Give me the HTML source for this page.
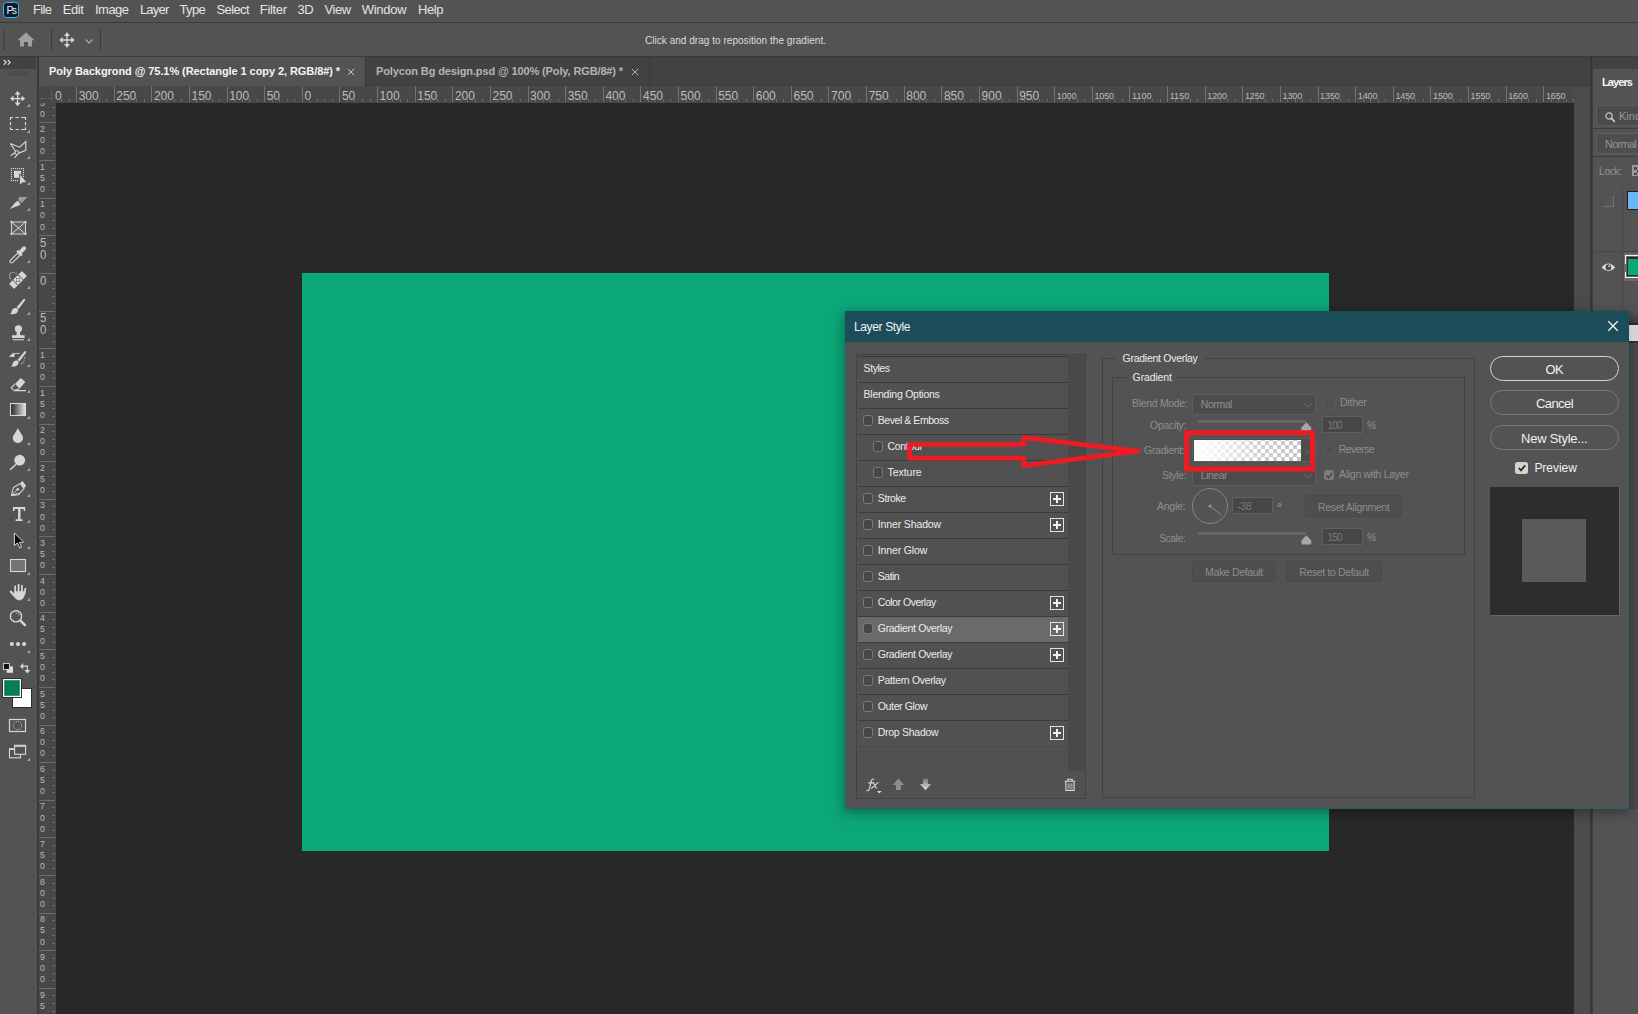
<!DOCTYPE html>
<html><head><meta charset="utf-8"><title>ps</title>
<style>
html,body{margin:0;padding:0;background:#535353;overflow:hidden;width:1638px;height:1014px;}
body{width:1638px;height:1014px;position:relative;overflow:hidden;font-family:"Liberation Sans",sans-serif;}
.a{position:absolute;box-sizing:border-box;}
.t{position:absolute;white-space:nowrap;font-family:"Liberation Sans",sans-serif;}
svg{position:absolute;overflow:visible;}
</style></head><body>
<div class="a" style="left:0px;top:0px;width:1638px;height:1014px;background:#535353;"></div>
<div class="a" style="left:0px;top:22px;width:1638px;height:1px;background:#3a3a3a;"></div>
<div class="a" style="left:0px;top:56px;width:1638px;height:1px;background:#3a3a3a;"></div>
<div class="a" style="left:37px;top:57px;width:1556px;height:29px;background:#424242;"></div>
<div class="a" style="left:56px;top:103px;width:1518px;height:911px;background:#282828;"></div>
<div class="a" style="left:39px;top:86px;width:1535px;height:17px;background:#484848;"></div>
<div class="a" style="left:39px;top:103px;width:17px;height:911px;background:#484848;"></div>
<div class="a" style="left:37px;top:85px;width:1556px;height:1px;background:#3a3a3a;"></div>
<div class="a" style="left:39px;top:86px;width:1535px;height:17px;overflow:hidden;"><div class="a" style="left:-39px;top:0;width:1574px;height:17px;"><div class="t" style="left:3.4px;top:1.6px;line-height:17px;font-size:12px;color:#bcbcbc;letter-spacing:-0.02px">400</div><div class="t" style="left:41.8px;top:1.6px;line-height:17px;font-size:12px;color:#bcbcbc;letter-spacing:-0.02px">350</div><div class="a" style="left:46px;top:13px;width:1px;height:3px;background:#6c6c6c"></div><div class="a" style="left:54px;top:13px;width:1px;height:3px;background:#6c6c6c"></div><div class="a" style="left:61px;top:13px;width:1px;height:3px;background:#6c6c6c"></div><div class="a" style="left:69px;top:13px;width:1px;height:3px;background:#6c6c6c"></div><div class="a" style="left:76px;top:0;width:1px;height:16px;background:#727272"></div><div class="t" style="left:78.7px;top:1.6px;line-height:17px;font-size:12px;color:#bcbcbc;letter-spacing:-0.02px">300</div><div class="a" style="left:84px;top:13px;width:1px;height:3px;background:#6c6c6c"></div><div class="a" style="left:91px;top:13px;width:1px;height:3px;background:#6c6c6c"></div><div class="a" style="left:99px;top:13px;width:1px;height:3px;background:#6c6c6c"></div><div class="a" style="left:106px;top:13px;width:1px;height:3px;background:#6c6c6c"></div><div class="a" style="left:114px;top:0;width:1px;height:16px;background:#727272"></div><div class="t" style="left:116.3px;top:1.6px;line-height:17px;font-size:12px;color:#bcbcbc;letter-spacing:-0.02px">250</div><div class="a" style="left:121px;top:13px;width:1px;height:3px;background:#6c6c6c"></div><div class="a" style="left:129px;top:13px;width:1px;height:3px;background:#6c6c6c"></div><div class="a" style="left:136px;top:13px;width:1px;height:3px;background:#6c6c6c"></div><div class="a" style="left:144px;top:13px;width:1px;height:3px;background:#6c6c6c"></div><div class="a" style="left:151px;top:0;width:1px;height:16px;background:#727272"></div><div class="t" style="left:153.9px;top:1.6px;line-height:17px;font-size:12px;color:#bcbcbc;letter-spacing:-0.02px">200</div><div class="a" style="left:159px;top:13px;width:1px;height:3px;background:#6c6c6c"></div><div class="a" style="left:166px;top:13px;width:1px;height:3px;background:#6c6c6c"></div><div class="a" style="left:174px;top:13px;width:1px;height:3px;background:#6c6c6c"></div><div class="a" style="left:181px;top:13px;width:1px;height:3px;background:#6c6c6c"></div><div class="a" style="left:189px;top:0;width:1px;height:16px;background:#727272"></div><div class="t" style="left:191.5px;top:1.6px;line-height:17px;font-size:12px;color:#bcbcbc;letter-spacing:-0.02px">150</div><div class="a" style="left:196px;top:13px;width:1px;height:3px;background:#6c6c6c"></div><div class="a" style="left:204px;top:13px;width:1px;height:3px;background:#6c6c6c"></div><div class="a" style="left:212px;top:13px;width:1px;height:3px;background:#6c6c6c"></div><div class="a" style="left:219px;top:13px;width:1px;height:3px;background:#6c6c6c"></div><div class="a" style="left:227px;top:0;width:1px;height:16px;background:#727272"></div><div class="t" style="left:229.2px;top:1.6px;line-height:17px;font-size:12px;color:#bcbcbc;letter-spacing:-0.02px">100</div><div class="a" style="left:234px;top:13px;width:1px;height:3px;background:#6c6c6c"></div><div class="a" style="left:242px;top:13px;width:1px;height:3px;background:#6c6c6c"></div><div class="a" style="left:249px;top:13px;width:1px;height:3px;background:#6c6c6c"></div><div class="a" style="left:257px;top:13px;width:1px;height:3px;background:#6c6c6c"></div><div class="a" style="left:264px;top:0;width:1px;height:16px;background:#727272"></div><div class="t" style="left:266.8px;top:1.6px;line-height:17px;font-size:12px;color:#bcbcbc;letter-spacing:-0.12px">50</div><div class="a" style="left:272px;top:13px;width:1px;height:3px;background:#6c6c6c"></div><div class="a" style="left:279px;top:13px;width:1px;height:3px;background:#6c6c6c"></div><div class="a" style="left:287px;top:13px;width:1px;height:3px;background:#6c6c6c"></div><div class="a" style="left:294px;top:13px;width:1px;height:3px;background:#6c6c6c"></div><div class="a" style="left:302px;top:0;width:1px;height:16px;background:#727272"></div><div class="t" style="left:304.4px;top:1.6px;line-height:17px;font-size:12px;color:#bcbcbc;letter-spacing:-0.42px">0</div><div class="a" style="left:309px;top:13px;width:1px;height:3px;background:#6c6c6c"></div><div class="a" style="left:317px;top:13px;width:1px;height:3px;background:#6c6c6c"></div><div class="a" style="left:324px;top:13px;width:1px;height:3px;background:#6c6c6c"></div><div class="a" style="left:332px;top:13px;width:1px;height:3px;background:#6c6c6c"></div><div class="a" style="left:339px;top:0;width:1px;height:16px;background:#727272"></div><div class="t" style="left:342.0px;top:1.6px;line-height:17px;font-size:12px;color:#bcbcbc;letter-spacing:-0.12px">50</div><div class="a" style="left:347px;top:13px;width:1px;height:3px;background:#6c6c6c"></div><div class="a" style="left:354px;top:13px;width:1px;height:3px;background:#6c6c6c"></div><div class="a" style="left:362px;top:13px;width:1px;height:3px;background:#6c6c6c"></div><div class="a" style="left:370px;top:13px;width:1px;height:3px;background:#6c6c6c"></div><div class="a" style="left:377px;top:0;width:1px;height:16px;background:#727272"></div><div class="t" style="left:379.6px;top:1.6px;line-height:17px;font-size:12px;color:#bcbcbc;letter-spacing:-0.02px">100</div><div class="a" style="left:385px;top:13px;width:1px;height:3px;background:#6c6c6c"></div><div class="a" style="left:392px;top:13px;width:1px;height:3px;background:#6c6c6c"></div><div class="a" style="left:400px;top:13px;width:1px;height:3px;background:#6c6c6c"></div><div class="a" style="left:407px;top:13px;width:1px;height:3px;background:#6c6c6c"></div><div class="a" style="left:415px;top:0;width:1px;height:16px;background:#727272"></div><div class="t" style="left:417.3px;top:1.6px;line-height:17px;font-size:12px;color:#bcbcbc;letter-spacing:-0.02px">150</div><div class="a" style="left:422px;top:13px;width:1px;height:3px;background:#6c6c6c"></div><div class="a" style="left:430px;top:13px;width:1px;height:3px;background:#6c6c6c"></div><div class="a" style="left:437px;top:13px;width:1px;height:3px;background:#6c6c6c"></div><div class="a" style="left:445px;top:13px;width:1px;height:3px;background:#6c6c6c"></div><div class="a" style="left:452px;top:0;width:1px;height:16px;background:#727272"></div><div class="t" style="left:454.9px;top:1.6px;line-height:17px;font-size:12px;color:#bcbcbc;letter-spacing:-0.02px">200</div><div class="a" style="left:460px;top:13px;width:1px;height:3px;background:#6c6c6c"></div><div class="a" style="left:467px;top:13px;width:1px;height:3px;background:#6c6c6c"></div><div class="a" style="left:475px;top:13px;width:1px;height:3px;background:#6c6c6c"></div><div class="a" style="left:482px;top:13px;width:1px;height:3px;background:#6c6c6c"></div><div class="a" style="left:490px;top:0;width:1px;height:16px;background:#727272"></div><div class="t" style="left:492.5px;top:1.6px;line-height:17px;font-size:12px;color:#bcbcbc;letter-spacing:-0.02px">250</div><div class="a" style="left:497px;top:13px;width:1px;height:3px;background:#6c6c6c"></div><div class="a" style="left:505px;top:13px;width:1px;height:3px;background:#6c6c6c"></div><div class="a" style="left:512px;top:13px;width:1px;height:3px;background:#6c6c6c"></div><div class="a" style="left:520px;top:13px;width:1px;height:3px;background:#6c6c6c"></div><div class="a" style="left:528px;top:0;width:1px;height:16px;background:#727272"></div><div class="t" style="left:530.1px;top:1.6px;line-height:17px;font-size:12px;color:#bcbcbc;letter-spacing:-0.02px">300</div><div class="a" style="left:535px;top:13px;width:1px;height:3px;background:#6c6c6c"></div><div class="a" style="left:543px;top:13px;width:1px;height:3px;background:#6c6c6c"></div><div class="a" style="left:550px;top:13px;width:1px;height:3px;background:#6c6c6c"></div><div class="a" style="left:558px;top:13px;width:1px;height:3px;background:#6c6c6c"></div><div class="a" style="left:565px;top:0;width:1px;height:16px;background:#727272"></div><div class="t" style="left:567.7px;top:1.6px;line-height:17px;font-size:12px;color:#bcbcbc;letter-spacing:-0.02px">350</div><div class="a" style="left:573px;top:13px;width:1px;height:3px;background:#6c6c6c"></div><div class="a" style="left:580px;top:13px;width:1px;height:3px;background:#6c6c6c"></div><div class="a" style="left:588px;top:13px;width:1px;height:3px;background:#6c6c6c"></div><div class="a" style="left:595px;top:13px;width:1px;height:3px;background:#6c6c6c"></div><div class="a" style="left:603px;top:0;width:1px;height:16px;background:#727272"></div><div class="t" style="left:605.4px;top:1.6px;line-height:17px;font-size:12px;color:#bcbcbc;letter-spacing:-0.02px">400</div><div class="a" style="left:610px;top:13px;width:1px;height:3px;background:#6c6c6c"></div><div class="a" style="left:618px;top:13px;width:1px;height:3px;background:#6c6c6c"></div><div class="a" style="left:625px;top:13px;width:1px;height:3px;background:#6c6c6c"></div><div class="a" style="left:633px;top:13px;width:1px;height:3px;background:#6c6c6c"></div><div class="a" style="left:640px;top:0;width:1px;height:16px;background:#727272"></div><div class="t" style="left:643.0px;top:1.6px;line-height:17px;font-size:12px;color:#bcbcbc;letter-spacing:-0.02px">450</div><div class="a" style="left:648px;top:13px;width:1px;height:3px;background:#6c6c6c"></div><div class="a" style="left:655px;top:13px;width:1px;height:3px;background:#6c6c6c"></div><div class="a" style="left:663px;top:13px;width:1px;height:3px;background:#6c6c6c"></div><div class="a" style="left:670px;top:13px;width:1px;height:3px;background:#6c6c6c"></div><div class="a" style="left:678px;top:0;width:1px;height:16px;background:#727272"></div><div class="t" style="left:680.6px;top:1.6px;line-height:17px;font-size:12px;color:#bcbcbc;letter-spacing:-0.02px">500</div><div class="a" style="left:686px;top:13px;width:1px;height:3px;background:#6c6c6c"></div><div class="a" style="left:693px;top:13px;width:1px;height:3px;background:#6c6c6c"></div><div class="a" style="left:701px;top:13px;width:1px;height:3px;background:#6c6c6c"></div><div class="a" style="left:708px;top:13px;width:1px;height:3px;background:#6c6c6c"></div><div class="a" style="left:716px;top:0;width:1px;height:16px;background:#727272"></div><div class="t" style="left:718.2px;top:1.6px;line-height:17px;font-size:12px;color:#bcbcbc;letter-spacing:-0.02px">550</div><div class="a" style="left:723px;top:13px;width:1px;height:3px;background:#6c6c6c"></div><div class="a" style="left:731px;top:13px;width:1px;height:3px;background:#6c6c6c"></div><div class="a" style="left:738px;top:13px;width:1px;height:3px;background:#6c6c6c"></div><div class="a" style="left:746px;top:13px;width:1px;height:3px;background:#6c6c6c"></div><div class="a" style="left:753px;top:0;width:1px;height:16px;background:#727272"></div><div class="t" style="left:755.8px;top:1.6px;line-height:17px;font-size:12px;color:#bcbcbc;letter-spacing:-0.02px">600</div><div class="a" style="left:761px;top:13px;width:1px;height:3px;background:#6c6c6c"></div><div class="a" style="left:768px;top:13px;width:1px;height:3px;background:#6c6c6c"></div><div class="a" style="left:776px;top:13px;width:1px;height:3px;background:#6c6c6c"></div><div class="a" style="left:783px;top:13px;width:1px;height:3px;background:#6c6c6c"></div><div class="a" style="left:791px;top:0;width:1px;height:16px;background:#727272"></div><div class="t" style="left:793.5px;top:1.6px;line-height:17px;font-size:12px;color:#bcbcbc;letter-spacing:-0.02px">650</div><div class="a" style="left:798px;top:13px;width:1px;height:3px;background:#6c6c6c"></div><div class="a" style="left:806px;top:13px;width:1px;height:3px;background:#6c6c6c"></div><div class="a" style="left:813px;top:13px;width:1px;height:3px;background:#6c6c6c"></div><div class="a" style="left:821px;top:13px;width:1px;height:3px;background:#6c6c6c"></div><div class="a" style="left:828px;top:0;width:1px;height:16px;background:#727272"></div><div class="t" style="left:831.1px;top:1.6px;line-height:17px;font-size:12px;color:#bcbcbc;letter-spacing:-0.02px">700</div><div class="a" style="left:836px;top:13px;width:1px;height:3px;background:#6c6c6c"></div><div class="a" style="left:844px;top:13px;width:1px;height:3px;background:#6c6c6c"></div><div class="a" style="left:851px;top:13px;width:1px;height:3px;background:#6c6c6c"></div><div class="a" style="left:859px;top:13px;width:1px;height:3px;background:#6c6c6c"></div><div class="a" style="left:866px;top:0;width:1px;height:16px;background:#727272"></div><div class="t" style="left:868.7px;top:1.6px;line-height:17px;font-size:12px;color:#bcbcbc;letter-spacing:-0.02px">750</div><div class="a" style="left:874px;top:13px;width:1px;height:3px;background:#6c6c6c"></div><div class="a" style="left:881px;top:13px;width:1px;height:3px;background:#6c6c6c"></div><div class="a" style="left:889px;top:13px;width:1px;height:3px;background:#6c6c6c"></div><div class="a" style="left:896px;top:13px;width:1px;height:3px;background:#6c6c6c"></div><div class="a" style="left:904px;top:0;width:1px;height:16px;background:#727272"></div><div class="t" style="left:906.3px;top:1.6px;line-height:17px;font-size:12px;color:#bcbcbc;letter-spacing:-0.02px">800</div><div class="a" style="left:911px;top:13px;width:1px;height:3px;background:#6c6c6c"></div><div class="a" style="left:919px;top:13px;width:1px;height:3px;background:#6c6c6c"></div><div class="a" style="left:926px;top:13px;width:1px;height:3px;background:#6c6c6c"></div><div class="a" style="left:934px;top:13px;width:1px;height:3px;background:#6c6c6c"></div><div class="a" style="left:941px;top:0;width:1px;height:16px;background:#727272"></div><div class="t" style="left:943.9px;top:1.6px;line-height:17px;font-size:12px;color:#bcbcbc;letter-spacing:-0.02px">850</div><div class="a" style="left:949px;top:13px;width:1px;height:3px;background:#6c6c6c"></div><div class="a" style="left:956px;top:13px;width:1px;height:3px;background:#6c6c6c"></div><div class="a" style="left:964px;top:13px;width:1px;height:3px;background:#6c6c6c"></div><div class="a" style="left:971px;top:13px;width:1px;height:3px;background:#6c6c6c"></div><div class="a" style="left:979px;top:0;width:1px;height:16px;background:#727272"></div><div class="t" style="left:981.6px;top:1.6px;line-height:17px;font-size:12px;color:#bcbcbc;letter-spacing:-0.02px">900</div><div class="a" style="left:986px;top:13px;width:1px;height:3px;background:#6c6c6c"></div><div class="a" style="left:994px;top:13px;width:1px;height:3px;background:#6c6c6c"></div><div class="a" style="left:1002px;top:13px;width:1px;height:3px;background:#6c6c6c"></div><div class="a" style="left:1009px;top:13px;width:1px;height:3px;background:#6c6c6c"></div><div class="a" style="left:1017px;top:0;width:1px;height:16px;background:#727272"></div><div class="t" style="left:1019.2px;top:1.6px;line-height:17px;font-size:12px;color:#bcbcbc;letter-spacing:-0.02px">950</div><div class="a" style="left:1024px;top:13px;width:1px;height:3px;background:#6c6c6c"></div><div class="a" style="left:1032px;top:13px;width:1px;height:3px;background:#6c6c6c"></div><div class="a" style="left:1039px;top:13px;width:1px;height:3px;background:#6c6c6c"></div><div class="a" style="left:1047px;top:13px;width:1px;height:3px;background:#6c6c6c"></div><div class="a" style="left:1054px;top:0;width:1px;height:16px;background:#727272"></div><div class="t" style="left:1056.8px;top:2.3px;line-height:17px;font-size:9px;color:#bcbcbc;letter-spacing:-0.10px">1000</div><div class="a" style="left:1062px;top:13px;width:1px;height:3px;background:#6c6c6c"></div><div class="a" style="left:1069px;top:13px;width:1px;height:3px;background:#6c6c6c"></div><div class="a" style="left:1077px;top:13px;width:1px;height:3px;background:#6c6c6c"></div><div class="a" style="left:1084px;top:13px;width:1px;height:3px;background:#6c6c6c"></div><div class="a" style="left:1092px;top:0;width:1px;height:16px;background:#727272"></div><div class="t" style="left:1094.4px;top:2.3px;line-height:17px;font-size:9px;color:#bcbcbc;letter-spacing:-0.10px">1050</div><div class="a" style="left:1099px;top:13px;width:1px;height:3px;background:#6c6c6c"></div><div class="a" style="left:1107px;top:13px;width:1px;height:3px;background:#6c6c6c"></div><div class="a" style="left:1114px;top:13px;width:1px;height:3px;background:#6c6c6c"></div><div class="a" style="left:1122px;top:13px;width:1px;height:3px;background:#6c6c6c"></div><div class="a" style="left:1129px;top:0;width:1px;height:16px;background:#727272"></div><div class="t" style="left:1132.0px;top:2.3px;line-height:17px;font-size:9px;color:#bcbcbc;letter-spacing:0.06px">1100</div><div class="a" style="left:1137px;top:13px;width:1px;height:3px;background:#6c6c6c"></div><div class="a" style="left:1144px;top:13px;width:1px;height:3px;background:#6c6c6c"></div><div class="a" style="left:1152px;top:13px;width:1px;height:3px;background:#6c6c6c"></div><div class="a" style="left:1160px;top:13px;width:1px;height:3px;background:#6c6c6c"></div><div class="a" style="left:1167px;top:0;width:1px;height:16px;background:#727272"></div><div class="t" style="left:1169.7px;top:2.3px;line-height:17px;font-size:9px;color:#bcbcbc;letter-spacing:0.06px">1150</div><div class="a" style="left:1175px;top:13px;width:1px;height:3px;background:#6c6c6c"></div><div class="a" style="left:1182px;top:13px;width:1px;height:3px;background:#6c6c6c"></div><div class="a" style="left:1190px;top:13px;width:1px;height:3px;background:#6c6c6c"></div><div class="a" style="left:1197px;top:13px;width:1px;height:3px;background:#6c6c6c"></div><div class="a" style="left:1205px;top:0;width:1px;height:16px;background:#727272"></div><div class="t" style="left:1207.3px;top:2.3px;line-height:17px;font-size:9px;color:#bcbcbc;letter-spacing:-0.10px">1200</div><div class="a" style="left:1212px;top:13px;width:1px;height:3px;background:#6c6c6c"></div><div class="a" style="left:1220px;top:13px;width:1px;height:3px;background:#6c6c6c"></div><div class="a" style="left:1227px;top:13px;width:1px;height:3px;background:#6c6c6c"></div><div class="a" style="left:1235px;top:13px;width:1px;height:3px;background:#6c6c6c"></div><div class="a" style="left:1242px;top:0;width:1px;height:16px;background:#727272"></div><div class="t" style="left:1244.9px;top:2.3px;line-height:17px;font-size:9px;color:#bcbcbc;letter-spacing:-0.10px">1250</div><div class="a" style="left:1250px;top:13px;width:1px;height:3px;background:#6c6c6c"></div><div class="a" style="left:1257px;top:13px;width:1px;height:3px;background:#6c6c6c"></div><div class="a" style="left:1265px;top:13px;width:1px;height:3px;background:#6c6c6c"></div><div class="a" style="left:1272px;top:13px;width:1px;height:3px;background:#6c6c6c"></div><div class="a" style="left:1280px;top:0;width:1px;height:16px;background:#727272"></div><div class="t" style="left:1282.5px;top:2.3px;line-height:17px;font-size:9px;color:#bcbcbc;letter-spacing:-0.10px">1300</div><div class="a" style="left:1287px;top:13px;width:1px;height:3px;background:#6c6c6c"></div><div class="a" style="left:1295px;top:13px;width:1px;height:3px;background:#6c6c6c"></div><div class="a" style="left:1302px;top:13px;width:1px;height:3px;background:#6c6c6c"></div><div class="a" style="left:1310px;top:13px;width:1px;height:3px;background:#6c6c6c"></div><div class="a" style="left:1318px;top:0;width:1px;height:16px;background:#727272"></div><div class="t" style="left:1320.1px;top:2.3px;line-height:17px;font-size:9px;color:#bcbcbc;letter-spacing:-0.10px">1350</div><div class="a" style="left:1325px;top:13px;width:1px;height:3px;background:#6c6c6c"></div><div class="a" style="left:1333px;top:13px;width:1px;height:3px;background:#6c6c6c"></div><div class="a" style="left:1340px;top:13px;width:1px;height:3px;background:#6c6c6c"></div><div class="a" style="left:1348px;top:13px;width:1px;height:3px;background:#6c6c6c"></div><div class="a" style="left:1355px;top:0;width:1px;height:16px;background:#727272"></div><div class="t" style="left:1357.8px;top:2.3px;line-height:17px;font-size:9px;color:#bcbcbc;letter-spacing:-0.10px">1400</div><div class="a" style="left:1363px;top:13px;width:1px;height:3px;background:#6c6c6c"></div><div class="a" style="left:1370px;top:13px;width:1px;height:3px;background:#6c6c6c"></div><div class="a" style="left:1378px;top:13px;width:1px;height:3px;background:#6c6c6c"></div><div class="a" style="left:1385px;top:13px;width:1px;height:3px;background:#6c6c6c"></div><div class="a" style="left:1393px;top:0;width:1px;height:16px;background:#727272"></div><div class="t" style="left:1395.4px;top:2.3px;line-height:17px;font-size:9px;color:#bcbcbc;letter-spacing:-0.10px">1450</div><div class="a" style="left:1400px;top:13px;width:1px;height:3px;background:#6c6c6c"></div><div class="a" style="left:1408px;top:13px;width:1px;height:3px;background:#6c6c6c"></div><div class="a" style="left:1415px;top:13px;width:1px;height:3px;background:#6c6c6c"></div><div class="a" style="left:1423px;top:13px;width:1px;height:3px;background:#6c6c6c"></div><div class="a" style="left:1430px;top:0;width:1px;height:16px;background:#727272"></div><div class="t" style="left:1433.0px;top:2.3px;line-height:17px;font-size:9px;color:#bcbcbc;letter-spacing:-0.10px">1500</div><div class="a" style="left:1438px;top:13px;width:1px;height:3px;background:#6c6c6c"></div><div class="a" style="left:1445px;top:13px;width:1px;height:3px;background:#6c6c6c"></div><div class="a" style="left:1453px;top:13px;width:1px;height:3px;background:#6c6c6c"></div><div class="a" style="left:1460px;top:13px;width:1px;height:3px;background:#6c6c6c"></div><div class="a" style="left:1468px;top:0;width:1px;height:16px;background:#727272"></div><div class="t" style="left:1470.6px;top:2.3px;line-height:17px;font-size:9px;color:#bcbcbc;letter-spacing:-0.10px">1550</div><div class="a" style="left:1476px;top:13px;width:1px;height:3px;background:#6c6c6c"></div><div class="a" style="left:1483px;top:13px;width:1px;height:3px;background:#6c6c6c"></div><div class="a" style="left:1491px;top:13px;width:1px;height:3px;background:#6c6c6c"></div><div class="a" style="left:1498px;top:13px;width:1px;height:3px;background:#6c6c6c"></div><div class="a" style="left:1506px;top:0;width:1px;height:16px;background:#727272"></div><div class="t" style="left:1508.2px;top:2.3px;line-height:17px;font-size:9px;color:#bcbcbc;letter-spacing:-0.10px">1600</div><div class="a" style="left:1513px;top:13px;width:1px;height:3px;background:#6c6c6c"></div><div class="a" style="left:1521px;top:13px;width:1px;height:3px;background:#6c6c6c"></div><div class="a" style="left:1528px;top:13px;width:1px;height:3px;background:#6c6c6c"></div><div class="a" style="left:1536px;top:13px;width:1px;height:3px;background:#6c6c6c"></div><div class="a" style="left:1543px;top:0;width:1px;height:16px;background:#727272"></div><div class="t" style="left:1545.9px;top:2.3px;line-height:17px;font-size:9px;color:#bcbcbc;letter-spacing:-0.10px">1650</div><div class="a" style="left:1551px;top:13px;width:1px;height:3px;background:#6c6c6c"></div><div class="a" style="left:1558px;top:13px;width:1px;height:3px;background:#6c6c6c"></div><div class="a" style="left:1566px;top:13px;width:1px;height:3px;background:#6c6c6c"></div><div class="a" style="left:1573px;top:13px;width:1px;height:3px;background:#6c6c6c"></div></div></div>
<div class="a" style="left:0;top:103px;width:56px;height:911px;overflow:hidden;"><div class="a" style="left:0;top:-103px;width:56px;height:1014px;"><div class="a" style="left:39px;top:47px;width:16px;height:1px;background:#6c6c6c"></div><div class="t" style="left:40.3px;top:47.8px;line-height:12px;font-size:9.5px;color:#bcbcbc;transform:scaleX(0.92);transform-origin:0 0;">3</div><div class="t" style="left:40.3px;top:58.9px;line-height:12px;font-size:9.5px;color:#bcbcbc;transform:scaleX(0.92);transform-origin:0 0;">0</div><div class="t" style="left:40.3px;top:70.0px;line-height:12px;font-size:9.5px;color:#bcbcbc;transform:scaleX(0.92);transform-origin:0 0;">0</div><div class="a" style="left:52px;top:55px;width:3px;height:1px;background:#6c6c6c"></div><div class="a" style="left:52px;top:62px;width:3px;height:1px;background:#6c6c6c"></div><div class="a" style="left:52px;top:70px;width:3px;height:1px;background:#6c6c6c"></div><div class="a" style="left:52px;top:77px;width:3px;height:1px;background:#6c6c6c"></div><div class="a" style="left:39px;top:85px;width:16px;height:1px;background:#6c6c6c"></div><div class="t" style="left:40.3px;top:85.4px;line-height:12px;font-size:9.5px;color:#bcbcbc;transform:scaleX(0.92);transform-origin:0 0;">2</div><div class="t" style="left:40.3px;top:96.5px;line-height:12px;font-size:9.5px;color:#bcbcbc;transform:scaleX(0.92);transform-origin:0 0;">5</div><div class="t" style="left:40.3px;top:107.6px;line-height:12px;font-size:9.5px;color:#bcbcbc;transform:scaleX(0.92);transform-origin:0 0;">0</div><div class="a" style="left:52px;top:92px;width:3px;height:1px;background:#6c6c6c"></div><div class="a" style="left:52px;top:100px;width:3px;height:1px;background:#6c6c6c"></div><div class="a" style="left:52px;top:107px;width:3px;height:1px;background:#6c6c6c"></div><div class="a" style="left:52px;top:115px;width:3px;height:1px;background:#6c6c6c"></div><div class="a" style="left:39px;top:122px;width:16px;height:1px;background:#6c6c6c"></div><div class="t" style="left:40.3px;top:123.1px;line-height:12px;font-size:9.5px;color:#bcbcbc;transform:scaleX(0.92);transform-origin:0 0;">2</div><div class="t" style="left:40.3px;top:134.2px;line-height:12px;font-size:9.5px;color:#bcbcbc;transform:scaleX(0.92);transform-origin:0 0;">0</div><div class="t" style="left:40.3px;top:145.3px;line-height:12px;font-size:9.5px;color:#bcbcbc;transform:scaleX(0.92);transform-origin:0 0;">0</div><div class="a" style="left:52px;top:130px;width:3px;height:1px;background:#6c6c6c"></div><div class="a" style="left:52px;top:138px;width:3px;height:1px;background:#6c6c6c"></div><div class="a" style="left:52px;top:145px;width:3px;height:1px;background:#6c6c6c"></div><div class="a" style="left:52px;top:153px;width:3px;height:1px;background:#6c6c6c"></div><div class="a" style="left:39px;top:160px;width:16px;height:1px;background:#6c6c6c"></div><div class="t" style="left:40.3px;top:160.7px;line-height:12px;font-size:9.5px;color:#bcbcbc;transform:scaleX(0.92);transform-origin:0 0;">1</div><div class="t" style="left:40.3px;top:171.8px;line-height:12px;font-size:9.5px;color:#bcbcbc;transform:scaleX(0.92);transform-origin:0 0;">5</div><div class="t" style="left:40.3px;top:182.9px;line-height:12px;font-size:9.5px;color:#bcbcbc;transform:scaleX(0.92);transform-origin:0 0;">0</div><div class="a" style="left:52px;top:168px;width:3px;height:1px;background:#6c6c6c"></div><div class="a" style="left:52px;top:175px;width:3px;height:1px;background:#6c6c6c"></div><div class="a" style="left:52px;top:183px;width:3px;height:1px;background:#6c6c6c"></div><div class="a" style="left:52px;top:190px;width:3px;height:1px;background:#6c6c6c"></div><div class="a" style="left:39px;top:198px;width:16px;height:1px;background:#6c6c6c"></div><div class="t" style="left:40.3px;top:198.3px;line-height:12px;font-size:9.5px;color:#bcbcbc;transform:scaleX(0.92);transform-origin:0 0;">1</div><div class="t" style="left:40.3px;top:209.4px;line-height:12px;font-size:9.5px;color:#bcbcbc;transform:scaleX(0.92);transform-origin:0 0;">0</div><div class="t" style="left:40.3px;top:220.5px;line-height:12px;font-size:9.5px;color:#bcbcbc;transform:scaleX(0.92);transform-origin:0 0;">0</div><div class="a" style="left:52px;top:205px;width:3px;height:1px;background:#6c6c6c"></div><div class="a" style="left:52px;top:213px;width:3px;height:1px;background:#6c6c6c"></div><div class="a" style="left:52px;top:220px;width:3px;height:1px;background:#6c6c6c"></div><div class="a" style="left:52px;top:228px;width:3px;height:1px;background:#6c6c6c"></div><div class="a" style="left:39px;top:235px;width:16px;height:1px;background:#6c6c6c"></div><div class="t" style="left:40.2px;top:236.2px;line-height:14px;font-size:12px;color:#bcbcbc;transform:scaleX(0.95);transform-origin:0 0;">5</div><div class="t" style="left:40.2px;top:248.2px;line-height:14px;font-size:12px;color:#bcbcbc;transform:scaleX(0.95);transform-origin:0 0;">0</div><div class="a" style="left:52px;top:243px;width:3px;height:1px;background:#6c6c6c"></div><div class="a" style="left:52px;top:250px;width:3px;height:1px;background:#6c6c6c"></div><div class="a" style="left:52px;top:258px;width:3px;height:1px;background:#6c6c6c"></div><div class="a" style="left:52px;top:265px;width:3px;height:1px;background:#6c6c6c"></div><div class="a" style="left:39px;top:273px;width:16px;height:1px;background:#6c6c6c"></div><div class="t" style="left:40.2px;top:273.8px;line-height:14px;font-size:12px;color:#bcbcbc;transform:scaleX(0.95);transform-origin:0 0;">0</div><div class="a" style="left:52px;top:281px;width:3px;height:1px;background:#6c6c6c"></div><div class="a" style="left:52px;top:288px;width:3px;height:1px;background:#6c6c6c"></div><div class="a" style="left:52px;top:296px;width:3px;height:1px;background:#6c6c6c"></div><div class="a" style="left:52px;top:303px;width:3px;height:1px;background:#6c6c6c"></div><div class="a" style="left:39px;top:311px;width:16px;height:1px;background:#6c6c6c"></div><div class="t" style="left:40.2px;top:311.4px;line-height:14px;font-size:12px;color:#bcbcbc;transform:scaleX(0.95);transform-origin:0 0;">5</div><div class="t" style="left:40.2px;top:323.4px;line-height:14px;font-size:12px;color:#bcbcbc;transform:scaleX(0.95);transform-origin:0 0;">0</div><div class="a" style="left:52px;top:318px;width:3px;height:1px;background:#6c6c6c"></div><div class="a" style="left:52px;top:326px;width:3px;height:1px;background:#6c6c6c"></div><div class="a" style="left:52px;top:333px;width:3px;height:1px;background:#6c6c6c"></div><div class="a" style="left:52px;top:341px;width:3px;height:1px;background:#6c6c6c"></div><div class="a" style="left:39px;top:348px;width:16px;height:1px;background:#6c6c6c"></div><div class="t" style="left:40.3px;top:348.9px;line-height:12px;font-size:9.5px;color:#bcbcbc;transform:scaleX(0.92);transform-origin:0 0;">1</div><div class="t" style="left:40.3px;top:360.0px;line-height:12px;font-size:9.5px;color:#bcbcbc;transform:scaleX(0.92);transform-origin:0 0;">0</div><div class="t" style="left:40.3px;top:371.1px;line-height:12px;font-size:9.5px;color:#bcbcbc;transform:scaleX(0.92);transform-origin:0 0;">0</div><div class="a" style="left:52px;top:356px;width:3px;height:1px;background:#6c6c6c"></div><div class="a" style="left:52px;top:363px;width:3px;height:1px;background:#6c6c6c"></div><div class="a" style="left:52px;top:371px;width:3px;height:1px;background:#6c6c6c"></div><div class="a" style="left:52px;top:378px;width:3px;height:1px;background:#6c6c6c"></div><div class="a" style="left:39px;top:386px;width:16px;height:1px;background:#6c6c6c"></div><div class="t" style="left:40.3px;top:386.5px;line-height:12px;font-size:9.5px;color:#bcbcbc;transform:scaleX(0.92);transform-origin:0 0;">1</div><div class="t" style="left:40.3px;top:397.6px;line-height:12px;font-size:9.5px;color:#bcbcbc;transform:scaleX(0.92);transform-origin:0 0;">5</div><div class="t" style="left:40.3px;top:408.7px;line-height:12px;font-size:9.5px;color:#bcbcbc;transform:scaleX(0.92);transform-origin:0 0;">0</div><div class="a" style="left:52px;top:393px;width:3px;height:1px;background:#6c6c6c"></div><div class="a" style="left:52px;top:401px;width:3px;height:1px;background:#6c6c6c"></div><div class="a" style="left:52px;top:408px;width:3px;height:1px;background:#6c6c6c"></div><div class="a" style="left:52px;top:416px;width:3px;height:1px;background:#6c6c6c"></div><div class="a" style="left:39px;top:424px;width:16px;height:1px;background:#6c6c6c"></div><div class="t" style="left:40.3px;top:424.1px;line-height:12px;font-size:9.5px;color:#bcbcbc;transform:scaleX(0.92);transform-origin:0 0;">2</div><div class="t" style="left:40.3px;top:435.2px;line-height:12px;font-size:9.5px;color:#bcbcbc;transform:scaleX(0.92);transform-origin:0 0;">0</div><div class="t" style="left:40.3px;top:446.3px;line-height:12px;font-size:9.5px;color:#bcbcbc;transform:scaleX(0.92);transform-origin:0 0;">0</div><div class="a" style="left:52px;top:431px;width:3px;height:1px;background:#6c6c6c"></div><div class="a" style="left:52px;top:439px;width:3px;height:1px;background:#6c6c6c"></div><div class="a" style="left:52px;top:446px;width:3px;height:1px;background:#6c6c6c"></div><div class="a" style="left:52px;top:454px;width:3px;height:1px;background:#6c6c6c"></div><div class="a" style="left:39px;top:461px;width:16px;height:1px;background:#6c6c6c"></div><div class="t" style="left:40.3px;top:461.8px;line-height:12px;font-size:9.5px;color:#bcbcbc;transform:scaleX(0.92);transform-origin:0 0;">2</div><div class="t" style="left:40.3px;top:472.9px;line-height:12px;font-size:9.5px;color:#bcbcbc;transform:scaleX(0.92);transform-origin:0 0;">5</div><div class="t" style="left:40.3px;top:483.9px;line-height:12px;font-size:9.5px;color:#bcbcbc;transform:scaleX(0.92);transform-origin:0 0;">0</div><div class="a" style="left:52px;top:469px;width:3px;height:1px;background:#6c6c6c"></div><div class="a" style="left:52px;top:476px;width:3px;height:1px;background:#6c6c6c"></div><div class="a" style="left:52px;top:484px;width:3px;height:1px;background:#6c6c6c"></div><div class="a" style="left:52px;top:491px;width:3px;height:1px;background:#6c6c6c"></div><div class="a" style="left:39px;top:499px;width:16px;height:1px;background:#6c6c6c"></div><div class="t" style="left:40.3px;top:499.4px;line-height:12px;font-size:9.5px;color:#bcbcbc;transform:scaleX(0.92);transform-origin:0 0;">3</div><div class="t" style="left:40.3px;top:510.5px;line-height:12px;font-size:9.5px;color:#bcbcbc;transform:scaleX(0.92);transform-origin:0 0;">0</div><div class="t" style="left:40.3px;top:521.6px;line-height:12px;font-size:9.5px;color:#bcbcbc;transform:scaleX(0.92);transform-origin:0 0;">0</div><div class="a" style="left:52px;top:506px;width:3px;height:1px;background:#6c6c6c"></div><div class="a" style="left:52px;top:514px;width:3px;height:1px;background:#6c6c6c"></div><div class="a" style="left:52px;top:521px;width:3px;height:1px;background:#6c6c6c"></div><div class="a" style="left:52px;top:529px;width:3px;height:1px;background:#6c6c6c"></div><div class="a" style="left:39px;top:536px;width:16px;height:1px;background:#6c6c6c"></div><div class="t" style="left:40.3px;top:537.0px;line-height:12px;font-size:9.5px;color:#bcbcbc;transform:scaleX(0.92);transform-origin:0 0;">3</div><div class="t" style="left:40.3px;top:548.1px;line-height:12px;font-size:9.5px;color:#bcbcbc;transform:scaleX(0.92);transform-origin:0 0;">5</div><div class="t" style="left:40.3px;top:559.2px;line-height:12px;font-size:9.5px;color:#bcbcbc;transform:scaleX(0.92);transform-origin:0 0;">0</div><div class="a" style="left:52px;top:544px;width:3px;height:1px;background:#6c6c6c"></div><div class="a" style="left:52px;top:551px;width:3px;height:1px;background:#6c6c6c"></div><div class="a" style="left:52px;top:559px;width:3px;height:1px;background:#6c6c6c"></div><div class="a" style="left:52px;top:567px;width:3px;height:1px;background:#6c6c6c"></div><div class="a" style="left:39px;top:574px;width:16px;height:1px;background:#6c6c6c"></div><div class="t" style="left:40.3px;top:574.6px;line-height:12px;font-size:9.5px;color:#bcbcbc;transform:scaleX(0.92);transform-origin:0 0;">4</div><div class="t" style="left:40.3px;top:585.7px;line-height:12px;font-size:9.5px;color:#bcbcbc;transform:scaleX(0.92);transform-origin:0 0;">0</div><div class="t" style="left:40.3px;top:596.8px;line-height:12px;font-size:9.5px;color:#bcbcbc;transform:scaleX(0.92);transform-origin:0 0;">0</div><div class="a" style="left:52px;top:582px;width:3px;height:1px;background:#6c6c6c"></div><div class="a" style="left:52px;top:589px;width:3px;height:1px;background:#6c6c6c"></div><div class="a" style="left:52px;top:597px;width:3px;height:1px;background:#6c6c6c"></div><div class="a" style="left:52px;top:604px;width:3px;height:1px;background:#6c6c6c"></div><div class="a" style="left:39px;top:612px;width:16px;height:1px;background:#6c6c6c"></div><div class="t" style="left:40.3px;top:612.3px;line-height:12px;font-size:9.5px;color:#bcbcbc;transform:scaleX(0.92);transform-origin:0 0;">4</div><div class="t" style="left:40.3px;top:623.4px;line-height:12px;font-size:9.5px;color:#bcbcbc;transform:scaleX(0.92);transform-origin:0 0;">5</div><div class="t" style="left:40.3px;top:634.5px;line-height:12px;font-size:9.5px;color:#bcbcbc;transform:scaleX(0.92);transform-origin:0 0;">0</div><div class="a" style="left:52px;top:619px;width:3px;height:1px;background:#6c6c6c"></div><div class="a" style="left:52px;top:627px;width:3px;height:1px;background:#6c6c6c"></div><div class="a" style="left:52px;top:634px;width:3px;height:1px;background:#6c6c6c"></div><div class="a" style="left:52px;top:642px;width:3px;height:1px;background:#6c6c6c"></div><div class="a" style="left:39px;top:649px;width:16px;height:1px;background:#6c6c6c"></div><div class="t" style="left:40.3px;top:649.9px;line-height:12px;font-size:9.5px;color:#bcbcbc;transform:scaleX(0.92);transform-origin:0 0;">5</div><div class="t" style="left:40.3px;top:661.0px;line-height:12px;font-size:9.5px;color:#bcbcbc;transform:scaleX(0.92);transform-origin:0 0;">0</div><div class="t" style="left:40.3px;top:672.1px;line-height:12px;font-size:9.5px;color:#bcbcbc;transform:scaleX(0.92);transform-origin:0 0;">0</div><div class="a" style="left:52px;top:657px;width:3px;height:1px;background:#6c6c6c"></div><div class="a" style="left:52px;top:664px;width:3px;height:1px;background:#6c6c6c"></div><div class="a" style="left:52px;top:672px;width:3px;height:1px;background:#6c6c6c"></div><div class="a" style="left:52px;top:679px;width:3px;height:1px;background:#6c6c6c"></div><div class="a" style="left:39px;top:687px;width:16px;height:1px;background:#6c6c6c"></div><div class="t" style="left:40.3px;top:687.5px;line-height:12px;font-size:9.5px;color:#bcbcbc;transform:scaleX(0.92);transform-origin:0 0;">5</div><div class="t" style="left:40.3px;top:698.6px;line-height:12px;font-size:9.5px;color:#bcbcbc;transform:scaleX(0.92);transform-origin:0 0;">5</div><div class="t" style="left:40.3px;top:709.7px;line-height:12px;font-size:9.5px;color:#bcbcbc;transform:scaleX(0.92);transform-origin:0 0;">0</div><div class="a" style="left:52px;top:694px;width:3px;height:1px;background:#6c6c6c"></div><div class="a" style="left:52px;top:702px;width:3px;height:1px;background:#6c6c6c"></div><div class="a" style="left:52px;top:710px;width:3px;height:1px;background:#6c6c6c"></div><div class="a" style="left:52px;top:717px;width:3px;height:1px;background:#6c6c6c"></div><div class="a" style="left:39px;top:725px;width:16px;height:1px;background:#6c6c6c"></div><div class="t" style="left:40.3px;top:725.2px;line-height:12px;font-size:9.5px;color:#bcbcbc;transform:scaleX(0.92);transform-origin:0 0;">6</div><div class="t" style="left:40.3px;top:736.3px;line-height:12px;font-size:9.5px;color:#bcbcbc;transform:scaleX(0.92);transform-origin:0 0;">0</div><div class="t" style="left:40.3px;top:747.4px;line-height:12px;font-size:9.5px;color:#bcbcbc;transform:scaleX(0.92);transform-origin:0 0;">0</div><div class="a" style="left:52px;top:732px;width:3px;height:1px;background:#6c6c6c"></div><div class="a" style="left:52px;top:740px;width:3px;height:1px;background:#6c6c6c"></div><div class="a" style="left:52px;top:747px;width:3px;height:1px;background:#6c6c6c"></div><div class="a" style="left:52px;top:755px;width:3px;height:1px;background:#6c6c6c"></div><div class="a" style="left:39px;top:762px;width:16px;height:1px;background:#6c6c6c"></div><div class="t" style="left:40.3px;top:762.8px;line-height:12px;font-size:9.5px;color:#bcbcbc;transform:scaleX(0.92);transform-origin:0 0;">6</div><div class="t" style="left:40.3px;top:773.9px;line-height:12px;font-size:9.5px;color:#bcbcbc;transform:scaleX(0.92);transform-origin:0 0;">5</div><div class="t" style="left:40.3px;top:785.0px;line-height:12px;font-size:9.5px;color:#bcbcbc;transform:scaleX(0.92);transform-origin:0 0;">0</div><div class="a" style="left:52px;top:770px;width:3px;height:1px;background:#6c6c6c"></div><div class="a" style="left:52px;top:777px;width:3px;height:1px;background:#6c6c6c"></div><div class="a" style="left:52px;top:785px;width:3px;height:1px;background:#6c6c6c"></div><div class="a" style="left:52px;top:792px;width:3px;height:1px;background:#6c6c6c"></div><div class="a" style="left:39px;top:800px;width:16px;height:1px;background:#6c6c6c"></div><div class="t" style="left:40.3px;top:800.4px;line-height:12px;font-size:9.5px;color:#bcbcbc;transform:scaleX(0.92);transform-origin:0 0;">7</div><div class="t" style="left:40.3px;top:811.5px;line-height:12px;font-size:9.5px;color:#bcbcbc;transform:scaleX(0.92);transform-origin:0 0;">0</div><div class="t" style="left:40.3px;top:822.6px;line-height:12px;font-size:9.5px;color:#bcbcbc;transform:scaleX(0.92);transform-origin:0 0;">0</div><div class="a" style="left:52px;top:807px;width:3px;height:1px;background:#6c6c6c"></div><div class="a" style="left:52px;top:815px;width:3px;height:1px;background:#6c6c6c"></div><div class="a" style="left:52px;top:822px;width:3px;height:1px;background:#6c6c6c"></div><div class="a" style="left:52px;top:830px;width:3px;height:1px;background:#6c6c6c"></div><div class="a" style="left:39px;top:837px;width:16px;height:1px;background:#6c6c6c"></div><div class="t" style="left:40.3px;top:838.1px;line-height:12px;font-size:9.5px;color:#bcbcbc;transform:scaleX(0.92);transform-origin:0 0;">7</div><div class="t" style="left:40.3px;top:849.2px;line-height:12px;font-size:9.5px;color:#bcbcbc;transform:scaleX(0.92);transform-origin:0 0;">5</div><div class="t" style="left:40.3px;top:860.3px;line-height:12px;font-size:9.5px;color:#bcbcbc;transform:scaleX(0.92);transform-origin:0 0;">0</div><div class="a" style="left:52px;top:845px;width:3px;height:1px;background:#6c6c6c"></div><div class="a" style="left:52px;top:853px;width:3px;height:1px;background:#6c6c6c"></div><div class="a" style="left:52px;top:860px;width:3px;height:1px;background:#6c6c6c"></div><div class="a" style="left:52px;top:868px;width:3px;height:1px;background:#6c6c6c"></div><div class="a" style="left:39px;top:875px;width:16px;height:1px;background:#6c6c6c"></div><div class="t" style="left:40.3px;top:875.7px;line-height:12px;font-size:9.5px;color:#bcbcbc;transform:scaleX(0.92);transform-origin:0 0;">8</div><div class="t" style="left:40.3px;top:886.8px;line-height:12px;font-size:9.5px;color:#bcbcbc;transform:scaleX(0.92);transform-origin:0 0;">0</div><div class="t" style="left:40.3px;top:897.9px;line-height:12px;font-size:9.5px;color:#bcbcbc;transform:scaleX(0.92);transform-origin:0 0;">0</div><div class="a" style="left:52px;top:883px;width:3px;height:1px;background:#6c6c6c"></div><div class="a" style="left:52px;top:890px;width:3px;height:1px;background:#6c6c6c"></div><div class="a" style="left:52px;top:898px;width:3px;height:1px;background:#6c6c6c"></div><div class="a" style="left:52px;top:905px;width:3px;height:1px;background:#6c6c6c"></div><div class="a" style="left:39px;top:913px;width:16px;height:1px;background:#6c6c6c"></div><div class="t" style="left:40.3px;top:913.3px;line-height:12px;font-size:9.5px;color:#bcbcbc;transform:scaleX(0.92);transform-origin:0 0;">8</div><div class="t" style="left:40.3px;top:924.4px;line-height:12px;font-size:9.5px;color:#bcbcbc;transform:scaleX(0.92);transform-origin:0 0;">5</div><div class="t" style="left:40.3px;top:935.5px;line-height:12px;font-size:9.5px;color:#bcbcbc;transform:scaleX(0.92);transform-origin:0 0;">0</div><div class="a" style="left:52px;top:920px;width:3px;height:1px;background:#6c6c6c"></div><div class="a" style="left:52px;top:928px;width:3px;height:1px;background:#6c6c6c"></div><div class="a" style="left:52px;top:935px;width:3px;height:1px;background:#6c6c6c"></div><div class="a" style="left:52px;top:943px;width:3px;height:1px;background:#6c6c6c"></div><div class="a" style="left:39px;top:950px;width:16px;height:1px;background:#6c6c6c"></div><div class="t" style="left:40.3px;top:950.9px;line-height:12px;font-size:9.5px;color:#bcbcbc;transform:scaleX(0.92);transform-origin:0 0;">9</div><div class="t" style="left:40.3px;top:962.0px;line-height:12px;font-size:9.5px;color:#bcbcbc;transform:scaleX(0.92);transform-origin:0 0;">0</div><div class="t" style="left:40.3px;top:973.1px;line-height:12px;font-size:9.5px;color:#bcbcbc;transform:scaleX(0.92);transform-origin:0 0;">0</div><div class="a" style="left:52px;top:958px;width:3px;height:1px;background:#6c6c6c"></div><div class="a" style="left:52px;top:965px;width:3px;height:1px;background:#6c6c6c"></div><div class="a" style="left:52px;top:973px;width:3px;height:1px;background:#6c6c6c"></div><div class="a" style="left:52px;top:980px;width:3px;height:1px;background:#6c6c6c"></div><div class="a" style="left:39px;top:988px;width:16px;height:1px;background:#6c6c6c"></div><div class="t" style="left:40.3px;top:988.6px;line-height:12px;font-size:9.5px;color:#bcbcbc;transform:scaleX(0.92);transform-origin:0 0;">9</div><div class="t" style="left:40.3px;top:999.7px;line-height:12px;font-size:9.5px;color:#bcbcbc;transform:scaleX(0.92);transform-origin:0 0;">5</div><div class="t" style="left:40.3px;top:1010.8px;line-height:12px;font-size:9.5px;color:#bcbcbc;transform:scaleX(0.92);transform-origin:0 0;">0</div><div class="a" style="left:52px;top:995px;width:3px;height:1px;background:#6c6c6c"></div><div class="a" style="left:52px;top:1003px;width:3px;height:1px;background:#6c6c6c"></div><div class="a" style="left:52px;top:1011px;width:3px;height:1px;background:#6c6c6c"></div><div class="a" style="left:52px;top:1018px;width:3px;height:1px;background:#6c6c6c"></div><div class="a" style="left:39px;top:1026px;width:16px;height:1px;background:#6c6c6c"></div><div class="t" style="left:40.3px;top:1026.2px;line-height:12px;font-size:9.5px;color:#bcbcbc;transform:scaleX(0.92);transform-origin:0 0;">1</div><div class="t" style="left:40.3px;top:1037.3px;line-height:12px;font-size:9.5px;color:#bcbcbc;transform:scaleX(0.92);transform-origin:0 0;">0</div><div class="t" style="left:40.3px;top:1048.4px;line-height:12px;font-size:9.5px;color:#bcbcbc;transform:scaleX(0.92);transform-origin:0 0;">0</div><div class="t" style="left:40.3px;top:1059.5px;line-height:12px;font-size:9.5px;color:#bcbcbc;transform:scaleX(0.92);transform-origin:0 0;">0</div><div class="a" style="left:52px;top:1033px;width:3px;height:1px;background:#6c6c6c"></div><div class="a" style="left:52px;top:1041px;width:3px;height:1px;background:#6c6c6c"></div><div class="a" style="left:52px;top:1048px;width:3px;height:1px;background:#6c6c6c"></div><div class="a" style="left:52px;top:1056px;width:3px;height:1px;background:#6c6c6c"></div></div></div>
<div class="a" style="left:39px;top:86px;width:16px;height:17px;background:#484848;"></div>
<div class="a" style="left:40px;top:98px;width:14px;height:1px;background:repeating-linear-gradient(to right,#6a6a6a 0,#6a6a6a 1px,transparent 1px,transparent 2px);"></div>
<div class="a" style="left:51px;top:87px;width:1px;height:15px;background:repeating-linear-gradient(to bottom,#6a6a6a 0,#6a6a6a 1px,transparent 1px,transparent 2px);"></div>
<div class="a" style="left:302px;top:273px;width:1027px;height:578px;background:#0ca778;"></div>
<div class="a" style="left:3px;top:2px;width:16px;height:16px;border:1.5px solid #2bbcff;border-radius:3.5px;background:#0a1c29;"></div>
<div class="t" style="left:6.60px;top:2.65px;line-height:14.5px;font-size:10.5px;color:#e2f2ff;letter-spacing:-1.827px;">Ps</div>
<div class="t" style="left:32.90px;top:1.10px;line-height:17px;font-size:13px;color:#e4e4e4;letter-spacing:-0.636px;">File</div>
<div class="t" style="left:62.70px;top:1.10px;line-height:17px;font-size:13px;color:#e4e4e4;letter-spacing:-0.375px;">Edit</div>
<div class="t" style="left:95.00px;top:1.10px;line-height:17px;font-size:13px;color:#e4e4e4;letter-spacing:-0.526px;">Image</div>
<div class="t" style="left:139.90px;top:1.10px;line-height:17px;font-size:13px;color:#e4e4e4;letter-spacing:-0.784px;">Layer</div>
<div class="t" style="left:179.50px;top:1.10px;line-height:17px;font-size:13px;color:#e4e4e4;letter-spacing:-0.621px;">Type</div>
<div class="t" style="left:216.50px;top:1.10px;line-height:17px;font-size:13px;color:#e4e4e4;letter-spacing:-0.605px;">Select</div>
<div class="t" style="left:259.80px;top:1.10px;line-height:17px;font-size:13px;color:#e4e4e4;letter-spacing:-0.331px;">Filter</div>
<div class="t" style="left:297.50px;top:1.10px;line-height:17px;font-size:13px;color:#e4e4e4;letter-spacing:-0.409px;">3D</div>
<div class="t" style="left:324.50px;top:1.10px;line-height:17px;font-size:13px;color:#e4e4e4;letter-spacing:-0.435px;">View</div>
<div class="t" style="left:361.70px;top:1.10px;line-height:17px;font-size:13px;color:#e4e4e4;letter-spacing:-0.272px;">Window</div>
<div class="t" style="left:417.90px;top:1.10px;line-height:17px;font-size:13px;color:#e4e4e4;letter-spacing:-0.384px;">Help</div>
<div class="a" style="left:3px;top:30px;width:2px;height:19px;background:repeating-linear-gradient(to bottom,#3c3c3c 0,#3c3c3c 1px,transparent 1px,transparent 2px);"></div>
<svg style="left:17px;top:32px" width="18" height="15" viewBox="0 0 18 15"><path d="M9 0.5 L0.5 8.2 H3 V14.5 H7 V10 H11 V14.5 H15 V8.2 H17.5 Z" fill="#a0a0a0"/></svg>
<div class="a" style="left:51px;top:28px;width:1px;height:23px;background:#3c3c3c;"></div>
<div class="a" style="left:100px;top:28px;width:1px;height:23px;background:#3c3c3c;"></div>
<svg style="left:59.4px;top:31.6px" width="16" height="16" viewBox="0 0 16 16"><path d="M8 0.3 L11 3.9 H8.65 V7.35 H12.1 V5 L15.7 8 L12.1 11 V8.65 H8.65 V12.1 H11 L8 15.7 L5 12.1 H7.35 V8.65 H3.9 V11 L0.3 8 L3.9 5 V7.35 H7.35 V3.9 H5 Z" fill="#d8d8d8"/></svg>
<svg style="left:84.5px;top:38.5px" width="8" height="5" viewBox="0 0 8 5"><path d="M0.5 0.5 L4 4 L7.5 0.5" fill="none" stroke="#b0b0b0" stroke-width="1.1"/></svg>
<div class="t" style="left:645.00px;top:33.50px;line-height:14px;font-size:10px;color:#dcdcdc;letter-spacing:0.035px;">Click and drag to reposition the gradient.</div>
<div class="a" style="left:39px;top:57px;width:326px;height:29px;background:#535353;"></div>
<div class="a" style="left:365px;top:57px;width:1px;height:29px;background:#383838;"></div>
<div class="a" style="left:649px;top:57px;width:1px;height:29px;background:#383838;"></div>
<div class="t" style="left:49.00px;top:64.00px;line-height:15px;font-size:11px;color:#f4f4f4;letter-spacing:-0.075px;font-weight:bold;">Poly Backgrond @ 75.1% (Rectangle 1 copy 2, RGB/8#) *</div>
<div class="t" style="left:376.00px;top:64.00px;line-height:15px;font-size:11px;color:#b4b4b4;letter-spacing:-0.124px;font-weight:bold;">Polycon Bg design.psd @ 100% (Poly, RGB/8#) *</div>
<svg style="left:346px;top:66.5px" width="10" height="10" viewBox="-5 -5 10 10"><path d="M-3.2 -3.2 L3.2 3.2 M3.2 -3.2 L-3.2 3.2" stroke="#c8c8c8" stroke-width="1" fill="none"/></svg>
<svg style="left:629.5px;top:66.5px" width="10" height="10" viewBox="-5 -5 10 10"><path d="M-3.2 -3.2 L3.2 3.2 M3.2 -3.2 L-3.2 3.2" stroke="#b0b0b0" stroke-width="1" fill="none"/></svg>
<div class="a" style="left:0px;top:57px;width:36px;height:11.5px;background:#424242;"></div>
<div class="a" style="left:37px;top:57px;width:2px;height:957px;background:#3a3a3a;"></div>
<svg style="left:3px;top:59px" width="9" height="7" viewBox="0 0 9 7"><path d="M0.7 0.8 L3.2 3.3 L0.7 5.8 M4.7 0.8 L7.2 3.3 L4.7 5.8" fill="none" stroke="#e6e6e6" stroke-width="1.1"/></svg>
<div class="a" style="left:8px;top:71px;width:20px;height:5px;background:repeating-linear-gradient(to right,#464646 0,#464646 1px,transparent 1px,transparent 2px);"></div>
<svg style="left:0;top:0" width="37" height="800" viewBox="0 0 37 800"><g transform="translate(9.7,90.7) scale(0.985)"><path d="M8 0.3 L11 3.9 H8.65 V7.35 H12.1 V5 L15.7 8 L12.1 11 V8.65 H8.65 V12.1 H11 L8 15.7 L5 12.1 H7.35 V8.65 H3.9 V11 L0.3 8 L3.9 5 V7.35 H7.35 V3.9 H5 Z" fill="#d6d6d6"/></g><path d="M30 103.8 V107 H26.8 Z" fill="#a6a6a6"/><path d="M10.5 120 V117.5 H13 M15.4 117.5 H19 M21.4 117.5 H25.5 V120 M25.5 122 V125.2 M25.5 127.2 V129.5 H21.4 M19 129.5 H15.4 M13 129.5 H10.5 V127.2 M10.5 125.2 V122" fill="none" stroke="#d6d6d6" stroke-width="1.2"/><path d="M30 129.8 V133 H26.8 Z" fill="#a6a6a6"/><path d="M10.3 143.5 L19.5 147.2 L25.8 141.5 L25.8 150.3 L18 153.4 M10.3 143.5 L15.8 151.8 M10.6 155.6 L15.6 152.6 M14.6 157.8 L17.8 153.8" fill="none" stroke="#d6d6d6" stroke-width="1.15"/><circle cx="16.85" cy="152.6" r="1.9" fill="#535353" stroke="#d6d6d6" stroke-width="1.1"/><path d="M30 155.8 V159 H26.8 Z" fill="#a6a6a6"/><rect x="10.9" y="168" width="1.15" height="1.15" fill="#d6d6d6"/><rect x="10.9" y="168" width="1.15" height="1.15" fill="#d6d6d6"/><rect x="10.9" y="180" width="1.15" height="1.15" fill="#d6d6d6"/><rect x="22.9" y="168" width="1.15" height="1.15" fill="#d6d6d6"/><rect x="12.9" y="168" width="1.15" height="1.15" fill="#d6d6d6"/><rect x="10.9" y="170" width="1.15" height="1.15" fill="#d6d6d6"/><rect x="12.9" y="180" width="1.15" height="1.15" fill="#d6d6d6"/><rect x="22.9" y="170" width="1.15" height="1.15" fill="#d6d6d6"/><rect x="14.9" y="168" width="1.15" height="1.15" fill="#d6d6d6"/><rect x="10.9" y="172" width="1.15" height="1.15" fill="#d6d6d6"/><rect x="14.9" y="180" width="1.15" height="1.15" fill="#d6d6d6"/><rect x="22.9" y="172" width="1.15" height="1.15" fill="#d6d6d6"/><rect x="16.9" y="168" width="1.15" height="1.15" fill="#d6d6d6"/><rect x="10.9" y="174" width="1.15" height="1.15" fill="#d6d6d6"/><rect x="16.9" y="180" width="1.15" height="1.15" fill="#d6d6d6"/><rect x="22.9" y="174" width="1.15" height="1.15" fill="#d6d6d6"/><rect x="18.9" y="168" width="1.15" height="1.15" fill="#d6d6d6"/><rect x="10.9" y="176" width="1.15" height="1.15" fill="#d6d6d6"/><rect x="22.9" y="176" width="1.15" height="1.15" fill="#d6d6d6"/><rect x="20.9" y="168" width="1.15" height="1.15" fill="#d6d6d6"/><rect x="10.9" y="178" width="1.15" height="1.15" fill="#d6d6d6"/><rect x="22.9" y="168" width="1.15" height="1.15" fill="#d6d6d6"/><rect x="10.9" y="180" width="1.15" height="1.15" fill="#d6d6d6"/><rect x="13.9" y="170.8" width="7.2" height="7" fill="#d6d6d6"/><path d="M19.6 173.6 L19.6 185.4 L22.6 182.8 L27 182.6 Z" fill="#d6d6d6" stroke="#535353" stroke-width="0.9"/><path d="M30 181.8 V185 H26.8 Z" fill="#a6a6a6"/><path d="M9.8 208.9 L14 204 Q16.4 201.4 17.9 200.8 Q19.8 202 20.3 205 Z" fill="#d6d6d6"/><path d="M18.1 198.6 L19.2 197 H27.2 L21.8 202.9 L19.3 201 Z" fill="#9e9e9e"/><path d="M30 207.8 V211 H26.8 Z" fill="#a6a6a6"/><rect x="11.5" y="222" width="14" height="12" fill="#626262" stroke="#d6d6d6" stroke-width="1"/><path d="M11.5 222 L25.5 234 M25.5 222 L11.5 234" stroke="#d6d6d6" stroke-width="1"/><circle cx="11.5" cy="222" r="1.15" fill="#d6d6d6"/><circle cx="25.5" cy="222" r="1.15" fill="#d6d6d6"/><circle cx="11.5" cy="234" r="1.15" fill="#d6d6d6"/><circle cx="25.5" cy="234" r="1.15" fill="#d6d6d6"/><path d="M10.6 260.2 L17.6 253.2 L19.8 255.4 L12.8 262.4 Q11.2 263.2 10.3 262.3 Q9.6 261.4 10.6 260.2 Z" fill="none" stroke="#d6d6d6" stroke-width="1.15"/><path d="M16.4 251.4 L18 249.8 L19.2 251 L22.4 247 Q24.4 245.6 25.6 246.9 Q26.7 248.2 25.4 250 L21.6 253.4 L22.8 254.6 L21.2 256.2 Z" fill="#d6d6d6"/><path d="M30 259.8 V263 H26.8 Z" fill="#a6a6a6"/><g transform="rotate(-45 18 279.9)"><rect x="8.9" y="276.3" width="18.2" height="7.2" rx="1" fill="#d6d6d6"/><rect x="13.9" y="276" width="0.75" height="8" fill="#535353"/><rect x="21.35" y="276" width="0.75" height="8" fill="#535353"/><circle cx="16.2" cy="279.9" r="0.7" fill="#3c3c3c"/><circle cx="19.8" cy="279.9" r="0.7" fill="#3c3c3c"/><circle cx="18" cy="278.1" r="0.7" fill="#3c3c3c"/><circle cx="18" cy="281.7" r="0.7" fill="#3c3c3c"/></g><circle cx="10.61" cy="278.59" r="0.6" fill="#d6d6d6"/><circle cx="9.63" cy="276.88" r="0.6" fill="#d6d6d6"/><circle cx="9.63" cy="274.92" r="0.6" fill="#d6d6d6"/><circle cx="10.61" cy="273.21" r="0.6" fill="#d6d6d6"/><circle cx="12.32" cy="272.23" r="0.6" fill="#d6d6d6"/><circle cx="14.28" cy="272.23" r="0.6" fill="#d6d6d6"/><circle cx="16.12" cy="273.36" r="0.6" fill="#d6d6d6"/><path d="M30 285.8 V289 H26.8 Z" fill="#a6a6a6"/><path d="M16.6 307.2 L23.4 299.2 Q24.6 298.2 25.2 299 Q25.6 299.8 24.8 300.8 L18.6 309 Z" fill="#d6d6d6"/><path d="M16 308 Q18 308.2 18.2 310 Q17.6 313.8 13.4 314.2 L10 314.2 Q11.4 313.2 11.6 311.4 Q12.6 307.6 16 308 Z" fill="#d6d6d6"/><path d="M30 311.8 V315 H26.8 Z" fill="#a6a6a6"/><circle cx="18.4" cy="328.8" r="3.6" fill="#d6d6d6"/><path d="M17 331 H19.8 L20.4 335.2 H24.6 V338 H12 V335.2 H16.4 Z" fill="#d6d6d6"/><rect x="12.8" y="339.2" width="11" height="1.1" fill="#d6d6d6"/><path d="M30 337.8 V341 H26.8 Z" fill="#a6a6a6"/><path d="M17.4 360 L24.4 351.4 Q25.4 350.6 26 351.4 Q26.3 352.2 25.6 353.2 L19.4 361.6 Z" fill="#d6d6d6"/><path d="M16.8 360.6 Q18.6 361 18.6 362.6 Q18 366 14.4 366.4 L11 366.4 Q12.4 365.4 12.6 363.8 Q13.6 360.4 16.8 360.6 Z" fill="#d6d6d6"/><path d="M19.6 353.6 Q16.4 352.6 13.2 354.4" fill="none" stroke="#d6d6d6" stroke-width="1"/><path d="M8.8 356.8 L13.6 352.4 L14.8 357 Z" fill="#d6d6d6"/><circle cx="24.6" cy="357.6" r="0.6" fill="#d6d6d6"/><circle cx="24.2" cy="360" r="0.6" fill="#d6d6d6"/><circle cx="23.2" cy="362.2" r="0.6" fill="#d6d6d6"/><circle cx="21.6" cy="363.8" r="0.6" fill="#d6d6d6"/><path d="M30 363.8 V367 H26.8 Z" fill="#a6a6a6"/><path d="M15.2 383.8 L20.8 378 L25.4 382 L19.4 388.8 Z" fill="#d6d6d6"/><path d="M15.2 383.8 L11.2 387.8 L14.4 390.6 H26 M14.4 390.6 L19.4 388.8" fill="none" stroke="#d6d6d6" stroke-width="1.1"/><path d="M30 389.8 V393 H26.8 Z" fill="#a6a6a6"/><defs><linearGradient id="tg" x1="0" x2="1" y1="0" y2="0"><stop offset="0" stop-color="#222"/><stop offset="1" stop-color="#e8e8e8"/></linearGradient></defs><rect x="10.5" y="403.5" width="15" height="12" fill="url(#tg)" stroke="#d6d6d6" stroke-width="1.1"/><path d="M30 415.8 V419 H26.8 Z" fill="#a6a6a6"/><path d="M17.9 428 Q19.4 431.6 21.8 434.6 Q24.2 438 22 441 Q20.4 443 17.9 443 Q15.4 443 13.8 441 Q11.6 438 14 434.6 Q16.4 431.6 17.9 428 Z" fill="#d6d6d6"/><path d="M30 441.8 V445 H26.8 Z" fill="#a6a6a6"/><circle cx="19.7" cy="460.2" r="5.4" fill="#d6d6d6"/><path d="M15.8 464.4 L10.4 469.6" stroke="#d6d6d6" stroke-width="1.4" stroke-linecap="round"/><path d="M30 467.8 V471 H26.8 Z" fill="#a6a6a6"/><path d="M20.4 483.6 L24 488.6 L19.6 493.4 L11.4 495.4 L13.4 487.6 Z" fill="none" stroke="#d6d6d6" stroke-width="1.1" stroke-linejoin="round"/><path d="M20.2 483 L22.4 481 L26 485.6 L24.2 488.2 Z" fill="#d6d6d6"/><path d="M11.6 495.2 L17.4 489.6" stroke="#d6d6d6" stroke-width="1"/><circle cx="17.8" cy="489.2" r="1.3" fill="#d6d6d6"/><path d="M12 495.8 L19.6 494.6" stroke="#d6d6d6" stroke-width="0.8"/><path d="M30 493.8 V497 H26.8 Z" fill="#a6a6a6"/><path d="M12.9 507.1 H25.2 V511 H23.7 V508.9 H20.5 V519.3 H22.5 V520.9 H15.6 V519.3 H18.1 V508.9 H14.5 V511 H12.9 Z" fill="#d6d6d6"/><path d="M30 519.8 V523 H26.8 Z" fill="#a6a6a6"/><path d="M14.4 533 V545.6 L17.4 543 L19.8 548 L21.6 547.2 L19.4 542.4 L23.6 542 Z" fill="#0a0a0a" stroke="#d6d6d6" stroke-width="1" stroke-linejoin="miter"/><path d="M30 545.8 V549 H26.8 Z" fill="#a6a6a6"/><rect x="10.5" y="559.5" width="15" height="12" fill="#737373" stroke="#d6d6d6" stroke-width="1.1"/><path d="M30 571.8 V575 H26.8 Z" fill="#a6a6a6"/><path d="M15.2 586.3 V593 M18.6 584.7 V593 M21.9 585.5 V593 M25.4 588.7 L24.5 594" fill="none" stroke="#d6d6d6" stroke-width="1.75" stroke-linecap="round"/><path d="M10.9 591.7 L15.2 596.6" fill="none" stroke="#d6d6d6" stroke-width="2.3" stroke-linecap="round"/><path d="M14.3 591.3 H25.3 L24.3 596.6 Q22.6 600.4 19.4 600.4 Q16 600.4 14.3 596.6 Z" fill="#d6d6d6"/><path d="M30 597.8 V601 H26.8 Z" fill="#a6a6a6"/><circle cx="16" cy="616.3" r="5.6" fill="none" stroke="#d6d6d6" stroke-width="1.35"/><path d="M20.7 620.9 L25 625.2" stroke="#d6d6d6" stroke-width="2.4" stroke-linecap="round"/><path d="M15.4 612.8 Q18.8 612.6 19.6 615.6" fill="none" stroke="#a8a8a8" stroke-width="0.9"/><circle cx="11.9" cy="644.1" r="2.1" fill="#d6d6d6"/><circle cx="18" cy="644.1" r="2.1" fill="#d6d6d6"/><circle cx="24.1" cy="644.1" r="2.1" fill="#d6d6d6"/><path d="M30 649.8 V653 H26.8 Z" fill="#a6a6a6"/><rect x="6.6" y="666.4" width="6.4" height="6.4" fill="#dedede"/><rect x="3.4" y="663.4" width="6" height="6" fill="#111" stroke="#dedede" stroke-width="0.9"/><path d="M22.6 666.2 H27.4 V670.6" fill="none" stroke="#d6d6d6" stroke-width="1.2"/><path d="M20 666.2 L23.2 663 V669.4 Z" fill="#d6d6d6"/><path d="M27.4 673.4 L24.4 670 H30.4 Z" fill="#d6d6d6"/><rect x="12.5" y="688.5" width="19" height="19" fill="#fff" stroke="#2e2e2e" stroke-width="1"/><rect x="2.5" y="678.5" width="19" height="19" fill="#fff" stroke="#2e2e2e" stroke-width="1"/><rect x="4.2" y="680.2" width="15.6" height="15.6" fill="#077d57"/><rect x="9.5" y="719.5" width="16" height="12" fill="none" stroke="#d6d6d6" stroke-width="1.2"/><circle cx="17.5" cy="725.5" r="4.1" fill="none" stroke="#d6d6d6" stroke-width="1" stroke-dasharray="0.9 1.25"/><rect x="9.5" y="748.8" width="11" height="9" fill="#535353" stroke="#d6d6d6" stroke-width="1.1"/><rect x="9.5" y="748.6" width="11" height="1.4" fill="#d6d6d6"/><rect x="14.6" y="745.3" width="11" height="9" fill="#535353" stroke="#d6d6d6" stroke-width="1.1"/><rect x="14.6" y="745.2" width="11" height="1.6" fill="#d6d6d6"/><path d="M30 757.8 V761 H26.8 Z" fill="#a6a6a6"/></svg>
<div class="a" style="left:1574px;top:86px;width:16px;height:928px;background:#4b4b4b;"></div>
<div class="a" style="left:1590px;top:57px;width:3px;height:957px;background:#3d3d3d;"></div>
<div class="a" style="left:1591px;top:57px;width:1px;height:957px;background:#333;"></div>
<div class="a" style="left:1593px;top:57px;width:45px;height:12px;background:#424242;"></div>
<div class="a" style="left:1593px;top:69px;width:45px;height:945px;background:#535353;"></div>
<div class="t" style="left:1602.00px;top:74.50px;line-height:15px;font-size:11px;color:#f6f6f6;letter-spacing:-0.911px;font-weight:bold;">Layers</div>
<div class="a" style="left:1596px;top:105px;width:60px;height:21px;border:1px solid #5c5c5c;border-radius:3px;background:#4b4b4b;"></div>
<svg style="left:1604px;top:110.5px" width="12" height="12" viewBox="0 0 12 12"><circle cx="5" cy="5" r="3.1" fill="none" stroke="#c8c8c8" stroke-width="1.2"/><path d="M7.4 7.4 L10.4 10.4" stroke="#c8c8c8" stroke-width="1.7" stroke-linecap="round"/></svg>
<div class="t" style="left:1619.00px;top:108.50px;line-height:15px;font-size:11px;color:#8e9aa2;letter-spacing:-0.004px;">Kind</div>
<div class="a" style="left:1593px;top:128px;width:45px;height:1px;background:#3e3e3e;"></div>
<div class="a" style="left:1596px;top:133px;width:60px;height:21px;border:1px solid #5e5e5e;border-radius:3px;background:#4d4d4d;"></div>
<div class="t" style="left:1605.00px;top:136.50px;line-height:15px;font-size:11px;color:#8d959c;letter-spacing:-0.741px;">Normal</div>
<div class="a" style="left:1593px;top:156px;width:45px;height:1px;background:#3e3e3e;"></div>
<div class="t" style="left:1599.00px;top:164.60px;line-height:14px;font-size:10px;color:#8e949a;letter-spacing:-0.180px;">Lock:</div>
<div class="a" style="left:1632px;top:165px;width:10px;height:11px;background:#9a9a9a;"></div>
<div class="a" style="left:1634px;top:167px;width:3px;height:3px;background:#4a4a4a;"></div>
<div class="a" style="left:1637px;top:170px;width:3px;height:3px;background:#4a4a4a;"></div>
<div class="a" style="left:1634px;top:173px;width:3px;height:2px;background:#4a4a4a;"></div>
<div class="a" style="left:1622px;top:187px;width:1px;height:124px;background:#474747;"></div>
<div class="a" style="left:1602px;top:195px;width:12px;height:12px;border-style:solid;border-width:1px;border-color:#4b4b4b #727272 #727272 #4b4b4b;background:#555;"></div>
<div class="a" style="left:1627px;top:191px;width:14px;height:19px;border:1.2px solid #241e1e;background:#68b7f7;"></div>
<div class="a" style="left:1593px;top:251px;width:45px;height:1px;background:#484848;"></div>
<svg style="left:1601px;top:262px" width="15" height="11" viewBox="0 0 15 11"><path d="M0.6 5.4 Q7.4 -2.6 14.2 5.4 Q7.4 12.6 0.6 5.4 Z" fill="#e0e0e0"/><circle cx="7.4" cy="5.2" r="2.9" fill="#4a4a4a"/><circle cx="8.3" cy="4.2" r="0.9" fill="#e0e0e0"/></svg>
<div class="a" style="left:1624px;top:253px;width:14px;height:28px;background:#6b6b6b;"></div>
<div class="a" style="left:1625px;top:255px;width:16px;height:23px;border:1.4px solid #f4f4f4;"></div>
<div class="a" style="left:1624.6px;top:264px;width:2.4px;height:8px;background:#6b6b6b;"></div>
<div class="a" style="left:1628px;top:256.4px;width:10px;height:20.4px;background:#6b6b6b;"></div>
<div class="a" style="left:1627px;top:256.9px;width:11px;height:19.4px;background:#2a2a2a;"></div>
<div class="a" style="left:1628px;top:258.6px;width:10px;height:16.5px;background:#0ca778;"></div>
<div class="a" style="left:1629px;top:311px;width:9px;height:498px;background:#494949;"></div>
<div class="a" style="left:1629px;top:311px;width:9px;height:12px;background:linear-gradient(#535353,#3c3c3c);"></div>
<div class="a" style="left:1629px;top:323px;width:9px;height:2px;background:#2c2c2c;"></div>
<div class="a" style="left:1629px;top:325px;width:9px;height:16px;background:linear-gradient(to right,#f2f2f2,#d6d6d6);"></div>
<div class="a" style="left:1629px;top:341px;width:9px;height:2px;background:#333;"></div>
<div class="a" style="left:845px;top:311px;width:784px;height:498px;background:#535353;box-shadow:-1px 3px 11px 1px rgba(0,0,0,0.33);border:1px solid #2b5f6e;"></div>
<div class="a" style="left:845px;top:311px;width:784px;height:31px;background:#1c4d5b;"></div>
<div class="t" style="left:854.00px;top:319.00px;line-height:16px;font-size:12px;color:#f2f2f2;letter-spacing:-0.366px;">Layer Style</div>
<svg style="left:1608px;top:321px" width="10" height="10" viewBox="-5 -5 10 10"><path d="M-4.7 -4.7 L4.7 4.7 M4.7 -4.7 L-4.7 4.7" stroke="#f4f4f4" stroke-width="1.3" fill="none"/></svg>
<div class="a" style="left:856px;top:354px;width:230px;height:445px;border:1px solid #434343;background:#515151;"></div>
<div class="a" style="left:1068px;top:356px;width:16.6px;height:415px;background:#494949;"></div>
<div class="a" style="left:858px;top:616px;width:210px;height:26px;background:#6a6a6a;"></div>
<div class="a" style="left:858px;top:382px;width:210px;height:1px;background:#3b3b3b;"></div>
<div class="t" style="left:863.60px;top:361.25px;line-height:14.5px;font-size:10.5px;color:#ececec;letter-spacing:-0.432px;">Styles</div>
<div class="a" style="left:858px;top:408px;width:210px;height:1px;background:#3b3b3b;"></div>
<div class="t" style="left:863.60px;top:387.25px;line-height:14.5px;font-size:10.5px;color:#ececec;letter-spacing:-0.248px;">Blending Options</div>
<div class="a" style="left:858px;top:434px;width:210px;height:1px;background:#3b3b3b;"></div>
<div class="a" style="left:862.8px;top:415.2px;width:10.6px;height:10.6px;border:1px solid #7a7a7a;border-radius:2.8px;background:#474747;"></div>
<div class="t" style="left:877.80px;top:413.25px;line-height:14.5px;font-size:10.5px;color:#ececec;letter-spacing:-0.445px;">Bevel &amp; Emboss</div>
<div class="a" style="left:858px;top:460px;width:210px;height:1px;background:#3b3b3b;"></div>
<div class="a" style="left:872.8px;top:441.2px;width:10.6px;height:10.6px;border:1px solid #7a7a7a;border-radius:2.8px;background:#474747;"></div>
<div class="t" style="left:887.60px;top:439.25px;line-height:14.5px;font-size:10.5px;color:#ececec;letter-spacing:-0.336px;">Contour</div>
<div class="a" style="left:858px;top:486px;width:210px;height:1px;background:#3b3b3b;"></div>
<div class="a" style="left:872.8px;top:467.2px;width:10.6px;height:10.6px;border:1px solid #7a7a7a;border-radius:2.8px;background:#474747;"></div>
<div class="t" style="left:887.60px;top:465.25px;line-height:14.5px;font-size:10.5px;color:#ececec;letter-spacing:-0.062px;">Texture</div>
<div class="a" style="left:858px;top:512px;width:210px;height:1px;background:#3b3b3b;"></div>
<div class="a" style="left:862.8px;top:493.2px;width:10.6px;height:10.6px;border:1px solid #7a7a7a;border-radius:2.8px;background:#474747;"></div>
<div class="t" style="left:877.80px;top:491.25px;line-height:14.5px;font-size:10.5px;color:#ececec;letter-spacing:-0.391px;">Stroke</div>
<div class="a" style="left:1050px;top:491.8px;width:14px;height:14px;border:1px solid #e2e2e2;"></div>
<div class="a" style="left:1053px;top:497.9px;width:8px;height:1.8px;background:#f0f0f0;"></div>
<div class="a" style="left:1056.1px;top:494.8px;width:1.8px;height:8px;background:#f0f0f0;"></div>
<div class="a" style="left:858px;top:538px;width:210px;height:1px;background:#3b3b3b;"></div>
<div class="a" style="left:862.8px;top:519.2px;width:10.6px;height:10.6px;border:1px solid #7a7a7a;border-radius:2.8px;background:#474747;"></div>
<div class="t" style="left:877.80px;top:517.25px;line-height:14.5px;font-size:10.5px;color:#ececec;letter-spacing:-0.133px;">Inner Shadow</div>
<div class="a" style="left:1050px;top:517.8px;width:14px;height:14px;border:1px solid #e2e2e2;"></div>
<div class="a" style="left:1053px;top:523.9px;width:8px;height:1.8px;background:#f0f0f0;"></div>
<div class="a" style="left:1056.1px;top:520.8px;width:1.8px;height:8px;background:#f0f0f0;"></div>
<div class="a" style="left:858px;top:564px;width:210px;height:1px;background:#3b3b3b;"></div>
<div class="a" style="left:862.8px;top:545.2px;width:10.6px;height:10.6px;border:1px solid #7a7a7a;border-radius:2.8px;background:#474747;"></div>
<div class="t" style="left:877.80px;top:543.25px;line-height:14.5px;font-size:10.5px;color:#ececec;letter-spacing:-0.147px;">Inner Glow</div>
<div class="a" style="left:858px;top:590px;width:210px;height:1px;background:#3b3b3b;"></div>
<div class="a" style="left:862.8px;top:571.2px;width:10.6px;height:10.6px;border:1px solid #7a7a7a;border-radius:2.8px;background:#474747;"></div>
<div class="t" style="left:877.80px;top:569.25px;line-height:14.5px;font-size:10.5px;color:#ececec;letter-spacing:-0.506px;">Satin</div>
<div class="a" style="left:858px;top:616px;width:210px;height:1px;background:#3b3b3b;"></div>
<div class="a" style="left:862.8px;top:597.2px;width:10.6px;height:10.6px;border:1px solid #7a7a7a;border-radius:2.8px;background:#474747;"></div>
<div class="t" style="left:877.80px;top:595.25px;line-height:14.5px;font-size:10.5px;color:#ececec;letter-spacing:-0.476px;">Color Overlay</div>
<div class="a" style="left:1050px;top:595.8px;width:14px;height:14px;border:1px solid #e2e2e2;"></div>
<div class="a" style="left:1053px;top:601.9px;width:8px;height:1.8px;background:#f0f0f0;"></div>
<div class="a" style="left:1056.1px;top:598.8px;width:1.8px;height:8px;background:#f0f0f0;"></div>
<div class="a" style="left:858px;top:642px;width:210px;height:1px;background:#3b3b3b;"></div>
<div class="a" style="left:862.8px;top:623.2px;width:10.6px;height:10.6px;border:1px solid #7a7a7a;border-radius:2.8px;background:#474747;"></div>
<div class="t" style="left:877.80px;top:621.25px;line-height:14.5px;font-size:10.5px;color:#ececec;letter-spacing:-0.316px;">Gradient Overlay</div>
<div class="a" style="left:1050px;top:621.8px;width:14px;height:14px;border:1px solid #e2e2e2;"></div>
<div class="a" style="left:1053px;top:627.9px;width:8px;height:1.8px;background:#f0f0f0;"></div>
<div class="a" style="left:1056.1px;top:624.8px;width:1.8px;height:8px;background:#f0f0f0;"></div>
<div class="a" style="left:858px;top:668px;width:210px;height:1px;background:#3b3b3b;"></div>
<div class="a" style="left:862.8px;top:649.2px;width:10.6px;height:10.6px;border:1px solid #7a7a7a;border-radius:2.8px;background:#474747;"></div>
<div class="t" style="left:877.80px;top:647.25px;line-height:14.5px;font-size:10.5px;color:#ececec;letter-spacing:-0.316px;">Gradient Overlay</div>
<div class="a" style="left:1050px;top:647.8px;width:14px;height:14px;border:1px solid #e2e2e2;"></div>
<div class="a" style="left:1053px;top:653.9px;width:8px;height:1.8px;background:#f0f0f0;"></div>
<div class="a" style="left:1056.1px;top:650.8px;width:1.8px;height:8px;background:#f0f0f0;"></div>
<div class="a" style="left:858px;top:694px;width:210px;height:1px;background:#3b3b3b;"></div>
<div class="a" style="left:862.8px;top:675.2px;width:10.6px;height:10.6px;border:1px solid #7a7a7a;border-radius:2.8px;background:#474747;"></div>
<div class="t" style="left:877.80px;top:673.25px;line-height:14.5px;font-size:10.5px;color:#ececec;letter-spacing:-0.330px;">Pattern Overlay</div>
<div class="a" style="left:858px;top:720px;width:210px;height:1px;background:#3b3b3b;"></div>
<div class="a" style="left:862.8px;top:701.2px;width:10.6px;height:10.6px;border:1px solid #7a7a7a;border-radius:2.8px;background:#474747;"></div>
<div class="t" style="left:877.80px;top:699.25px;line-height:14.5px;font-size:10.5px;color:#ececec;letter-spacing:-0.360px;">Outer Glow</div>
<div class="a" style="left:858px;top:746px;width:210px;height:1px;background:#494949;"></div>
<div class="a" style="left:862.8px;top:727.2px;width:10.6px;height:10.6px;border:1px solid #7a7a7a;border-radius:2.8px;background:#474747;"></div>
<div class="t" style="left:877.80px;top:725.25px;line-height:14.5px;font-size:10.5px;color:#ececec;letter-spacing:-0.283px;">Drop Shadow</div>
<div class="a" style="left:1050px;top:725.8px;width:14px;height:14px;border:1px solid #e2e2e2;"></div>
<div class="a" style="left:1053px;top:731.9px;width:8px;height:1.8px;background:#f0f0f0;"></div>
<div class="a" style="left:1056.1px;top:728.8px;width:1.8px;height:8px;background:#f0f0f0;"></div>
<div class="a" style="left:858px;top:356px;width:210px;height:1px;background:#3b3b3b;"></div>
<svg style="left:864px;top:774px" width="18" height="20" viewBox="0 0 18 20"><path d="M3 16.6 Q4.9 17 5.4 14.8 L7.3 6.8 Q7.9 4.7 9.7 5.3 M4.6 8.8 H8.8 M7.6 14.3 L13.9 8.6 M9.4 8.6 L12.4 14.3" fill="none" stroke="#d6d6d6" stroke-width="1.15" stroke-linecap="round"/></svg>
<svg style="left:877px;top:791px" width="5" height="3" viewBox="0 0 5 3"><path d="M0 0 H4.6 L2.3 2.6 Z" fill="#dcdcdc"/></svg>
<svg style="left:892px;top:778px" width="13" height="13" viewBox="0 0 13 13"><path d="M6.5 0.6 L12.2 7 H9 V12 H4 V7 H0.8 Z" fill="#8e8e8e"/></svg>
<svg style="left:919px;top:778px" width="13" height="13" viewBox="0 0 13 13"><defs><linearGradient id="ag" x1="0" x2="0" y1="0" y2="1"><stop offset="0" stop-color="#7a7a7a"/><stop offset="1" stop-color="#e0e0e0"/></linearGradient></defs><path d="M6.5 12.2 L12.2 6 H9 V0.8 H4 V6 H0.8 Z" fill="url(#ag)"/></svg>
<svg style="left:1063.8px;top:778px" width="12" height="14" viewBox="0 0 12 14"><path d="M0.8 3.2 H11.2 M3.8 2.8 V1.2 H8.2 V2.8 M1.9 3.8 V12.4 H10.1 V3.8" fill="none" stroke="#dadada" stroke-width="1.1"/><path d="M4.1 5.4 V10.8 M6 5.4 V10.8 M7.9 5.4 V10.8" fill="none" stroke="#d0d0d0" stroke-width="0.85"/></svg>
<div class="a" style="left:1102px;top:358px;width:373px;height:440px;border:1px solid #424242;"></div>
<div class="a" style="left:1116px;top:357px;width:89px;height:3px;background:#535353;"></div>
<div class="t" style="left:1122.60px;top:351.35px;line-height:14.5px;font-size:10.5px;color:#ececec;letter-spacing:-0.273px;">Gradient Overlay</div>
<div class="a" style="left:1112px;top:377px;width:353px;height:178px;border:1px solid #424242;"></div>
<div class="a" style="left:1126px;top:376px;width:51px;height:3px;background:#535353;"></div>
<div class="t" style="left:1132.60px;top:370.35px;line-height:14.5px;font-size:10.5px;color:#ececec;letter-spacing:-0.134px;">Gradient</div>
<div class="t" style="left:1132.00px;top:396.05px;line-height:14.5px;font-size:10.5px;color:#8f8f8f;letter-spacing:-0.314px;">Blend Mode:</div>
<div class="a" style="left:1192px;top:394px;width:124px;height:21px;border:1px solid #5c5c5c;border-radius:3px;background:#4c4c4c;"></div>
<div class="t" style="left:1200.80px;top:397.45px;line-height:14.5px;font-size:10.5px;color:#8c8c8c;letter-spacing:-0.440px;">Normal</div>
<svg style="left:1304px;top:403.0px" width="8" height="5" viewBox="0 0 8 5"><path d="M0.5 0.5 L4 4 L7.5 0.5" fill="none" stroke="#6c6c6c" stroke-width="1"/></svg>
<div class="a" style="left:1324px;top:398px;width:10.6px;height:10.6px;border:1px solid #5c5c5c;border-radius:2.8px;background:#505050;"></div>
<div class="t" style="left:1340.00px;top:394.85px;line-height:14.5px;font-size:10.5px;color:#8f8f8f;letter-spacing:-0.235px;">Dither</div>
<div class="t" style="left:1150.00px;top:418.05px;line-height:14.5px;font-size:10.5px;color:#8f8f8f;letter-spacing:-0.289px;">Opacity:</div>
<div class="a" style="left:1198px;top:420px;width:108px;height:3px;background:#676767;"></div>
<svg style="left:1300.5px;top:422.1px" width="10.6" height="9.8" viewBox="0 0 10.6 9.8"><path d="M5.3 0.2 L10.2 5.4 V8.6 Q10.2 9.6 9.2 9.6 H1.4 Q0.4 9.6 0.4 8.6 V5.4 Z" fill="#a6a6a6"/></svg>
<div class="a" style="left:1322px;top:416px;width:41px;height:17px;border:1px solid #5f5f5f;background:#464646;"></div>
<div class="t" style="left:1327.30px;top:417.60px;line-height:14.5px;font-size:10.5px;color:#787878;letter-spacing:-1.072px;">100</div>
<div class="t" style="left:1367.00px;top:417.65px;line-height:14.5px;font-size:10.5px;color:#8f8f8f;letter-spacing:0.000px;">%</div>
<div class="t" style="left:1144.00px;top:442.65px;line-height:14.5px;font-size:10.5px;color:#8f8f8f;letter-spacing:-0.287px;">Gradient:</div>
<div class="a" style="left:1192px;top:438px;width:124px;height:24px;border:1px solid #5c5c5c;border-radius:3px;background:#4c4c4c;"></div>
<svg style="left:1304px;top:448.5px" width="8" height="5" viewBox="0 0 8 5"><path d="M0.5 0.5 L4 4 L7.5 0.5" fill="none" stroke="#6c6c6c" stroke-width="1"/></svg>
<div class="a" style="left:1194px;top:440px;width:107px;height:21px;background-color:#fff;background-image:linear-gradient(45deg,#c4c4c4 25%,transparent 25%,transparent 75%,#c4c4c4 75%),linear-gradient(45deg,#c4c4c4 25%,transparent 25%,transparent 75%,#c4c4c4 75%);background-size:8px 8px;background-position:3px 1px,7px 5px;"></div>
<div class="a" style="left:1194px;top:440px;width:107px;height:21px;background:linear-gradient(to right,rgba(255,255,255,1) 0%,rgba(255,255,255,0.8) 20%,rgba(255,255,255,0.45) 45%,rgba(255,255,255,0.14) 72%,rgba(255,255,255,0) 100%);"></div>
<div class="a" style="left:1323.8px;top:444.8px;width:10.6px;height:10.6px;border:1px solid #5c5c5c;border-radius:2.8px;background:#505050;"></div>
<div class="t" style="left:1338.70px;top:442.35px;line-height:14.5px;font-size:10.5px;color:#8f8f8f;letter-spacing:-0.528px;">Reverse</div>
<div class="t" style="left:1162.00px;top:467.65px;line-height:14.5px;font-size:10.5px;color:#8f8f8f;letter-spacing:-0.377px;">Style:</div>
<div class="a" style="left:1192px;top:465px;width:124px;height:21px;border:1px solid #5c5c5c;border-radius:3px;background:#4c4c4c;"></div>
<div class="t" style="left:1200.80px;top:468.45px;line-height:14.5px;font-size:10.5px;color:#8c8c8c;letter-spacing:-0.498px;">Linear</div>
<svg style="left:1304px;top:474.0px" width="8" height="5" viewBox="0 0 8 5"><path d="M0.5 0.5 L4 4 L7.5 0.5" fill="none" stroke="#6c6c6c" stroke-width="1"/></svg>
<div class="a" style="left:1324px;top:470px;width:10.4px;height:10.4px;border-radius:2.5px;background:#7c7c7c;"></div>
<svg style="left:1325px;top:471px" width="9" height="9" viewBox="0 0 9 9"><path d="M1.6 4.6 L3.6 6.8 L7.4 2" fill="none" stroke="#4a4a4a" stroke-width="1.6"/></svg>
<div class="t" style="left:1339.00px;top:467.15px;line-height:14.5px;font-size:10.5px;color:#8f8f8f;letter-spacing:-0.282px;">Align with Layer</div>
<div class="t" style="left:1157.00px;top:498.65px;line-height:14.5px;font-size:10.5px;color:#8f8f8f;letter-spacing:-0.262px;">Angle:</div>
<svg style="left:1190px;top:486px" width="40" height="40" viewBox="0 0 40 40"><circle cx="20" cy="20" r="17.5" fill="none" stroke="#858585" stroke-width="1"/><circle cx="20" cy="20" r="1.5" fill="#9a9a9a"/><path d="M20 20 L31.6 29" stroke="#8a8a8a" stroke-width="1"/></svg>
<div class="a" style="left:1232px;top:497px;width:41px;height:17px;border:1px solid #5f5f5f;background:#464646;"></div>
<div class="t" style="left:1237.30px;top:498.60px;line-height:14.5px;font-size:10.5px;color:#787878;letter-spacing:-0.458px;">-38</div>
<div class="t" style="left:1277.20px;top:500.40px;line-height:16px;font-size:12px;color:#8f8f8f;letter-spacing:0.000px;font-weight:bold;">°</div>
<div class="a" style="left:1305px;top:495px;width:97px;height:22.4px;border:1px solid #494949;border-radius:3px;background:#4e4e4e;"></div>
<div class="t" style="left:1318.00px;top:499.55px;line-height:14.5px;font-size:10.5px;color:#8c8c8c;letter-spacing:-0.337px;">Reset Alignment</div>
<div class="t" style="left:1159.00px;top:530.75px;line-height:14.5px;font-size:10.5px;color:#8f8f8f;letter-spacing:-0.497px;">Scale:</div>
<div class="a" style="left:1198px;top:532px;width:108px;height:3px;background:#676767;"></div>
<svg style="left:1300.5px;top:534.6px" width="10.6" height="9.8" viewBox="0 0 10.6 9.8"><path d="M5.3 0.2 L10.2 5.4 V8.6 Q10.2 9.6 9.2 9.6 H1.4 Q0.4 9.6 0.4 8.6 V5.4 Z" fill="#a6a6a6"/></svg>
<div class="a" style="left:1322px;top:528.4px;width:41px;height:17px;border:1px solid #5f5f5f;background:#464646;"></div>
<div class="t" style="left:1327.30px;top:530.00px;line-height:14.5px;font-size:10.5px;color:#787878;letter-spacing:-1.072px;">150</div>
<div class="t" style="left:1367.00px;top:529.65px;line-height:14.5px;font-size:10.5px;color:#8f8f8f;letter-spacing:0.000px;">%</div>
<div class="a" style="left:1192px;top:561px;width:83px;height:21.4px;border:1px solid #494949;border-radius:3px;background:#4e4e4e;"></div>
<div class="t" style="left:1205.00px;top:565.05px;line-height:14.5px;font-size:10.5px;color:#8c8c8c;letter-spacing:-0.338px;">Make Default</div>
<div class="a" style="left:1286px;top:561px;width:96px;height:21.4px;border:1px solid #494949;border-radius:3px;background:#4e4e4e;"></div>
<div class="t" style="left:1299.20px;top:565.05px;line-height:14.5px;font-size:10.5px;color:#8c8c8c;letter-spacing:-0.355px;">Reset to Default</div>
<div class="a" style="left:1489.5px;top:356.2px;width:129px;height:25px;border:1.9px solid #d4d4d4;border-radius:13px;"></div>
<div class="t" style="left:1545.60px;top:360.70px;line-height:17px;font-size:13px;color:#f4f4f4;letter-spacing:-0.691px;">OK</div>
<div class="a" style="left:1489.5px;top:390.4px;width:129px;height:25px;border:1.25px solid #787878;border-radius:13px;"></div>
<div class="t" style="left:1536.00px;top:394.90px;line-height:17px;font-size:13px;color:#f0f0f0;letter-spacing:-0.577px;">Cancel</div>
<div class="a" style="left:1489.5px;top:425.4px;width:129px;height:25px;border:1.25px solid #787878;border-radius:13px;"></div>
<div class="t" style="left:1521.00px;top:429.90px;line-height:17px;font-size:13px;color:#f0f0f0;letter-spacing:-0.246px;">New Style...</div>
<div class="a" style="left:1515.4px;top:461.8px;width:12.4px;height:12.4px;border-radius:2.5px;background:#d2d2d2;"></div>
<svg style="left:1516.5px;top:463px" width="10" height="10" viewBox="0 0 10 10"><path d="M1.8 5 L4 7.4 L8.2 2.4" fill="none" stroke="#2a2a2a" stroke-width="1.7"/></svg>
<div class="t" style="left:1534.40px;top:459.60px;line-height:16px;font-size:12px;color:#f0f0f0;letter-spacing:-0.040px;">Preview</div>
<div class="a" style="left:1490px;top:486.6px;width:130px;height:129.4px;background:#666;"></div>
<div class="a" style="left:1490px;top:486.6px;width:129px;height:128.4px;background:#2d2d2d;"></div>
<div class="a" style="left:1522px;top:518.8px;width:64.2px;height:63.6px;background:#5a5a5a;"></div>
<svg style="left:0;top:0" width="1638" height="1014" viewBox="0 0 1638 1014"><path d="M909.5 444.4 L1023.8 444.4 L1023.8 437.6 L1138 451.2 L1023.8 465.6 L1023.8 458.2 L909.5 458.2 Z" fill="none" stroke="#ed1c24" stroke-width="4.8" stroke-linejoin="round"/><rect x="1186.6" y="432.7" width="125.8" height="36.4" fill="none" stroke="#ed1c24" stroke-width="5"/></svg>
</body></html>
